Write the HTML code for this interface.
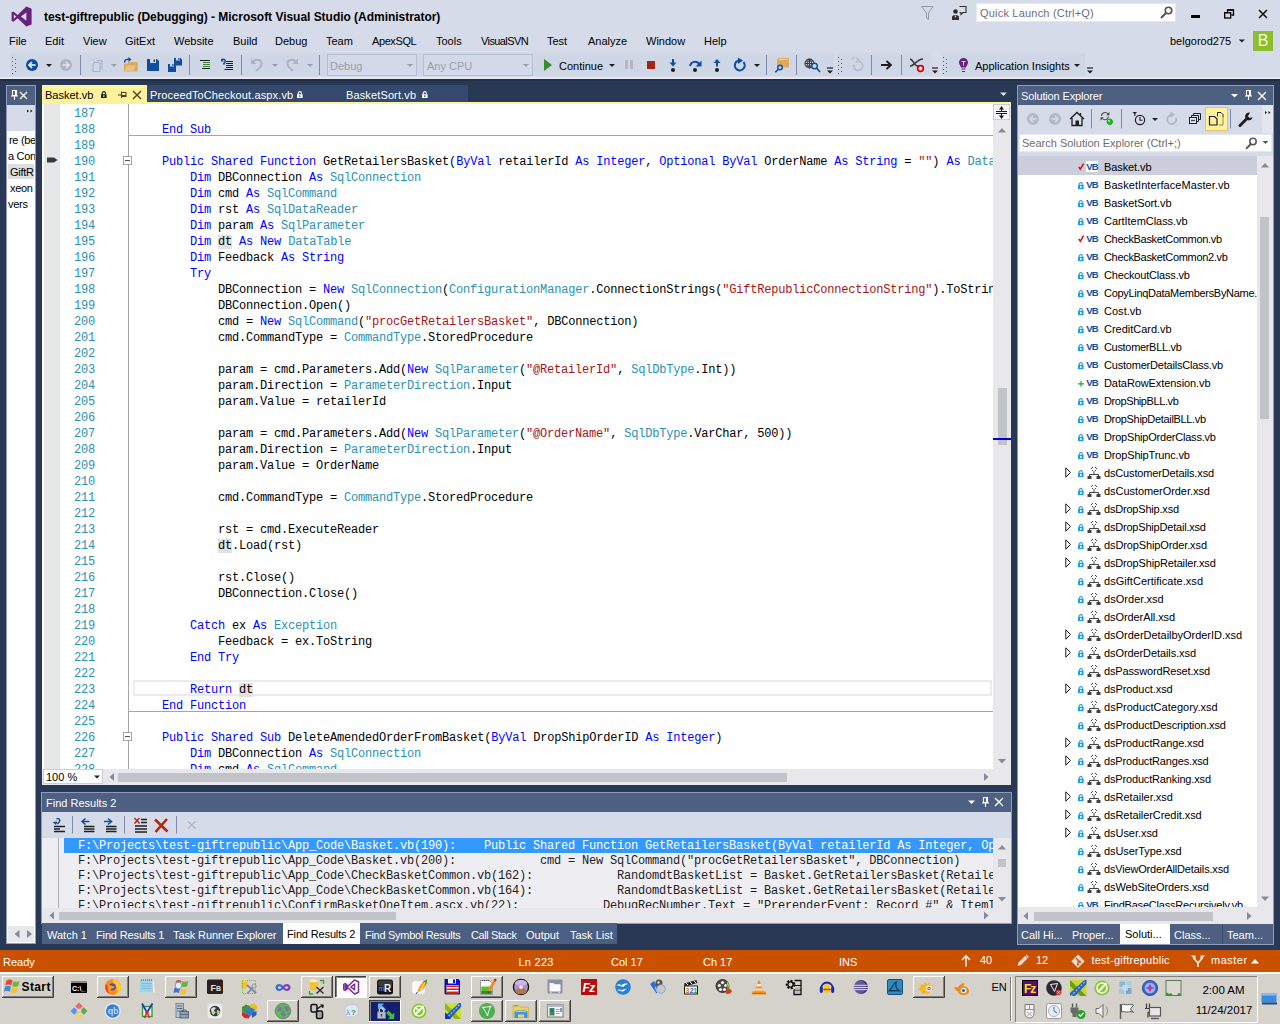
<!DOCTYPE html>
<html><head><meta charset="utf-8"><title>VS</title>
<style>
*{box-sizing:border-box}
html,body{margin:0;padding:0}
body{width:1280px;height:1024px;overflow:hidden;position:relative;background:#293955;font-family:"Liberation Sans",sans-serif;font-size:11px;color:#000;line-height:14px}
.a{position:absolute}
.t{position:absolute;white-space:pre;line-height:14px}
.w{color:#fff}
.mono{font-family:"Liberation Mono",monospace;font-size:12px;letter-spacing:-0.2px}
#chrome{left:0;top:0;width:1280px;height:79px;background:#d6dbe9}
.k{color:#0000ff}.y{color:#2b91af}.s{color:#a31515}
.cl{position:absolute;left:134px;height:16px;line-height:21px;white-space:pre;font-family:"Liberation Mono",monospace;font-size:12px;letter-spacing:-0.2px;color:#000}
.ln{position:absolute;left:67px;width:28px;text-align:right;height:16px;line-height:21px;font-family:"Liberation Mono",monospace;font-size:12px;letter-spacing:-0.2px;color:#2b91af}
.hl{background:#e2e2e2}
.fr{position:absolute;left:64px;height:15px;line-height:16px;white-space:pre;font-family:"Liberation Mono",monospace;font-size:12px;letter-spacing:-0.2px;color:#1e1e1e}
.se{position:absolute;left:86px;height:18px;line-height:18px;white-space:pre;letter-spacing:-0.1px}
svg{position:absolute;overflow:visible}
</style></head><body>
<!-- title / menu / toolbar -->
<div class="a" id="chrome"></div>
<div class="a" style="left:0;top:77px;width:1280px;height:2px;background:#e6e9f2"></div>
<div class="a" style="left:0;top:79px;width:1280px;height:2px;background:#222f48"></div>
<svg style="left:10.4px;top:5.4px" width="23.2" height="23.2" viewBox="0 0 22 22"><path d="M15.5 1.5 L20.5 3.6 L20.5 18.4 L15.5 20.5 L7.2 12.6 L3.2 15.8 L1.5 14.9 L1.5 7.1 L3.2 6.2 L7.2 9.4 Z M15.5 7 L10.4 11 L15.5 15 Z M3.6 8.9 L3.6 13.1 L6 11 Z" fill="#68217a" fill-rule="evenodd"/></svg>
<div class="t" style="left:44px;top:9.5px;font-weight:bold;font-size:12px;letter-spacing:-0.03px">test-giftrepublic (Debugging) - Microsoft Visual Studio (Administrator)</div>
<!-- menu -->
<div class="t" style="left:9px;top:34px">File</div>
<div class="t" style="left:45px;top:34px">Edit</div>
<div class="t" style="left:83px;top:34px">View</div>
<div class="t" style="left:125px;top:34px">GitExt</div>
<div class="t" style="left:174px;top:34px">Website</div>
<div class="t" style="left:233px;top:34px">Build</div>
<div class="t" style="left:275px;top:34px">Debug</div>
<div class="t" style="left:326px;top:34px">Team</div>
<div class="t" style="left:372px;top:34px;letter-spacing:-0.4px">ApexSQL</div>
<div class="t" style="left:436px;top:34px">Tools</div>
<div class="t" style="left:481px;top:34px;letter-spacing:-0.6px">VisualSVN</div>
<div class="t" style="left:547px;top:34px">Test</div>
<div class="t" style="left:588px;top:34px">Analyze</div>
<div class="t" style="left:646px;top:34px">Window</div>
<div class="t" style="left:704px;top:34px">Help</div>
<div class="t" style="left:1170px;top:34px">belgorod275</div>
<!-- title right -->
<div class="a" style="left:976px;top:3px;width:200px;height:19px;background:#fff;border:1px solid #e5e8f0"></div>
<div class="t" style="left:980px;top:6px;color:#6a6f80;letter-spacing:0.2px">Quick Launch (Ctrl+Q)</div>
<div class="a" style="left:1253px;top:31px;width:20px;height:20px;background:#8dbd2e;color:#f4fadf;font-size:16px;line-height:20px;text-align:center">B</div>
<svg style="left:0;top:0" width="1280" height="52" viewBox="0 0 1280 52">
<path d="M921.500 6.500h11.500l-4.500 6.500v6.500l-2-1.500v-5z" fill="none" stroke="#979aa5" stroke-width="1"/>
<circle cx="955.500" cy="11.500" r="2.300" fill="#2d2d2d"/><path d="M952 20v-3.500l2-1.500h3l2 1.500V20z" fill="#2d2d2d"/><path d="M954.500 15.500l1 2.500l1-2.500" fill="#d6dbe9"/>
<path d="M959.500 6.500h6.500v6h-3l-2 2v-2h-1.500" fill="none" stroke="#2d2d2d" stroke-width="1.100"/>
<circle cx="1168.500" cy="10.500" r="3.300" fill="none" stroke="#555" stroke-width="1.600"/><path d="M1166 13l-5 5" stroke="#555" stroke-width="2"/>
<rect x="1191" y="15" width="9" height="3" fill="#000"/>
<path d="M1227.500 12v-2h6v5h-2" fill="none" stroke="#000" stroke-width="1.300"/><rect x="1224.700" y="12.700" width="6" height="5.300" fill="none" stroke="#000" stroke-width="1.300"/><path d="M1227 9.800h7M1224 12.600h7" stroke="#000" stroke-width="1.200"/>
<path d="M1259 10l8 8M1267 10l-8 8" stroke="#000" stroke-width="1.500"/>
<path d="M1238.800 39.500h6l-3 3z" fill="#1e1e1e"/>
</svg>
<!-- toolbar -->
<div class="a" style="left:10px;top:53px;width:824px;height:23px;background:#cfd6e5"></div>
<div class="a" style="left:837px;top:53px;width:93px;height:23px;background:#cfd6e5"></div>
<div class="a" style="left:942px;top:53px;width:143px;height:23px;background:#cfd6e5"></div>
<div class="a" style="left:327px;top:54px;width:90px;height:22px;border:1px solid #b4bfd6;background:#d3d9e8"></div>
<div class="a" style="left:423px;top:54px;width:110px;height:22px;border:1px solid #b4bfd6;background:#d3d9e8"></div>
<div class="t" style="left:330px;top:59px;color:#9a9eab">Debug</div>
<div class="t" style="left:427px;top:59px;color:#9a9eab">Any CPU</div>
<div class="t" style="left:559px;top:59px">Continue</div>
<div class="t" style="left:975px;top:59px">Application Insights</div>
<svg style="left:0;top:0" width="1280" height="80" viewBox="0 0 1280 80">
<defs>
<g id="grip"><path d="M0 1.500h1M3 3.500h1M0 5.500h1M3 7.500h1M0 9.500h1M3 11.500h1M0 13.500h1M3 15.500h1M0 17.500h1" stroke="#4f5b75" stroke-width="1"/></g>
<path id="dd" d="M-3 -1.500h6l-3 3z"/>
<g id="ovf"><path d="M-3 -3.500h6" stroke="#1e1e1e" stroke-width="1.200"/><path d="M-3 -1h6l-3 3z" fill="#1e1e1e"/></g>
</defs>
<use href="#grip" x="12" y="56"/>
<use href="#grip" x="838" y="56"/>
<use href="#grip" x="943" y="56"/>
<!-- back / fwd -->
<circle cx="32" cy="65" r="6" fill="#0e4e9e"/><path d="M35.500 65H29.500M32 62l-3 3l3 3" stroke="#fff" stroke-width="1.600" fill="none"/>
<use href="#dd" x="49" y="65.500" fill="#1e1e1e"/>
<circle cx="66" cy="65" r="6" fill="#b0b4c0"/><path d="M62.500 65H68.500M66 62l3 3l-3 3" stroke="#dfe3ee" stroke-width="1.600" fill="none"/>
<path d="M80.500 55V75M189.500 55V75M241.500 55V75M319.500 55V75M766.500 55V75M796.500 55V75M871.500 55V75M901.500 55V75" stroke="#7f8ba8" stroke-width="1"/>
<!-- new item (disabled) -->
<path d="M94.500 62.500h5.500v9h-7v-7zM96.500 60.500h5.500v9" fill="none" stroke="#adb2c2" stroke-width="1.100"/><path d="M92 58.500l2 2M94.500 58v2" stroke="#bfc4d2" stroke-width="1"/>
<use href="#dd" x="114" y="65.500" fill="#9a9eab"/>
<!-- open -->
<path d="M124 71.500V63.500h4l1-1.500h8.500V71.500z" fill="#dcaa5e"/><path d="M128 62.500h9v7" fill="none" stroke="#dcaa5e" stroke-width="1"/><path d="M126.500 65.500h9l-2 6h-9z" fill="#e8c284"/>
<path d="M124.500 62.500c0-3 2.500-3.500 5-3" fill="none" stroke="#0e4e9e" stroke-width="1.500"/><path d="M128.500 57l3 2.500l-3 2.500z" fill="#0e4e9e"/>
<!-- save -->
<path d="M147 59h10l2 2v10h-12z" fill="#0e4e9e"/><rect x="150" y="59" width="6" height="4" fill="#cfd6e5"/><rect x="153.500" y="59.500" width="1.500" height="2.500" fill="#0e4e9e"/>
<!-- save all -->
<path d="M174 58h6.500l1.500 1.500v6h-8z" fill="#0e4e9e"/><rect x="176" y="58" width="4" height="2.500" fill="#cfd6e5"/><rect x="178.300" y="58" width="1.200" height="2" fill="#0e4e9e"/>
<path d="M168 64h6.500l1.500 1.500v6.500h-8z" fill="#0e4e9e"/><rect x="170" y="64" width="4" height="2.500" fill="#cfd6e5"/><rect x="172.300" y="64" width="1.200" height="2" fill="#0e4e9e"/>
<!-- indent icons -->
<path d="M200 60.500h10M202 68.500h8" stroke="#1e1e1e" stroke-width="1.200"/><path d="M203 62.500h7M203 64.500h7M203 66.500h7" stroke="#388a34" stroke-width="1.200"/>
<path d="M226 61.500h7M226 63.500h7M226 65.500h7M226 67.500h7M224.500 69.500h8.500" stroke="#1e1e1e" stroke-width="1.100"/><path d="M221.500 60c2.500-1.500 4.500 0 3.500 2l-1.500 2.500" fill="none" stroke="#0e4e9e" stroke-width="1.500"/><path d="M221 58.500v3h3z" fill="#0e4e9e"/>
<!-- undo / redo disabled -->
<path d="M253 62c3-3.500 9-2.500 8.500 2c-.3 3-3 5-5.500 7" fill="none" stroke="#adb2c2" stroke-width="2"/><path d="M251 58.500v5.500h5.500z" fill="#adb2c2"/>
<use href="#dd" x="275" y="65.500" fill="#9a9eab"/>
<path d="M296 62c-3-3.500-9-2.500-8.500 2c.3 3 3 5 5.500 7" fill="none" stroke="#adb2c2" stroke-width="2"/><path d="M298 58.500v5.500h-5.500z" fill="#adb2c2"/>
<use href="#dd" x="310" y="65.500" fill="#9a9eab"/>
<use href="#dd" x="410" y="65.500" fill="#9a9eab"/>
<use href="#dd" x="526" y="65.500" fill="#9a9eab"/>
<!-- continue -->
<path d="M544 59l8 6l-8 6z" fill="#388a34"/>
<use href="#dd" x="612" y="65.500" fill="#1e1e1e"/>
<rect x="625" y="60" width="3" height="9" fill="#b4b7c3"/><rect x="630" y="60" width="3" height="9" fill="#b4b7c3"/>
<rect x="647" y="61" width="8" height="8" fill="#a1260d"/>
<!-- step into/over/out -->
<path d="M673 59v5" stroke="#0e4e9e" stroke-width="2"/><path d="M669.500 62.500h7l-3.500 4z" fill="#0e4e9e"/><circle cx="673" cy="70" r="2" fill="#1e1e1e"/>
<path d="M690 66c1-5 7-5.500 9.500-1.500" fill="none" stroke="#0e4e9e" stroke-width="2"/><path d="M701.500 60.500v6h-6z" fill="#0e4e9e"/><circle cx="695" cy="70" r="2" fill="#1e1e1e"/>
<path d="M717 61v5.500" stroke="#0e4e9e" stroke-width="2"/><path d="M713.500 63h7l-3.500-4z" fill="#0e4e9e"/><circle cx="717" cy="70" r="2" fill="#1e1e1e"/>
<!-- restart -->
<path d="M743.500 62a5 5 0 1 1 -5.500 -1.300" fill="none" stroke="#0e4e9e" stroke-width="2"/><path d="M738 57.500l5 3l-5 3.500z" fill="#0e4e9e"/>
<use href="#dd" x="757" y="65.500" fill="#1e1e1e"/>
<!-- folder search -->
<path d="M777 67.500V59.500l1.500-1.500h10.500v9.500z" fill="#dcaa5e"/><path d="M779 59.500h9" stroke="#efd3a0" stroke-width="1"/>
<circle cx="780" cy="67.500" r="2.300" fill="#cfd6e5" stroke="#0e4e9e" stroke-width="1.400"/><path d="M778.300 69.200l-3 3" stroke="#0e4e9e" stroke-width="1.600"/>
<!-- globe search -->
<circle cx="809.500" cy="63.500" r="4.500" fill="none" stroke="#3a3a3a" stroke-width="1.200"/><path d="M805 63.500h9M809.500 59v9M806 61h7M806 66h7" stroke="#3a3a3a" stroke-width="1" fill="none"/><ellipse cx="809.500" cy="63.500" rx="2" ry="4.500" fill="none" stroke="#3a3a3a" stroke-width="1"/>
<circle cx="814.500" cy="66" r="2.800" fill="#cfd6e5" stroke="#0e4e9e" stroke-width="1.400"/><path d="M816.500 68l3.500 4" stroke="#0e4e9e" stroke-width="1.600"/>
<use href="#ovf" x="830" y="71.500"/>
<!-- disabled circular -->
<path d="M859 61.500a4.500 4.500 0 1 1 -5 3" fill="none" stroke="#b4b9c8" stroke-width="1.600"/><path d="M852 59l2.500-1.500M856 58l3 2l-3 2.500" fill="none" stroke="#b4b9c8" stroke-width="1.200"/>
<!-- arrow -->
<path d="M881 65h9M886.500 61l4.500 4l-4.500 4" fill="none" stroke="#1e1e1e" stroke-width="1.800"/>
<!-- break all / disable -->
<path d="M910 59c3 0 4 7 8 7h5M910 66c4 0 7-7 13-7" fill="none" stroke="#3a3a3a" stroke-width="1.600"/>
<circle cx="920.500" cy="68.500" r="2.800" fill="#fff" stroke="#e00000" stroke-width="1.800"/>
<use href="#ovf" x="935" y="71.500"/>
<!-- bulb -->
<path d="M963.500 58a4.500 4.500 0 0 1 4.500 4.500c0 2-1.500 3-2 5h-5c-.5-2-2-3-2-5a4.500 4.500 0 0 1 4.500-4.500z" fill="#68217a"/><path d="M961.500 69h4M962 71.500h3" stroke="#68217a" stroke-width="1.200"/><path d="M961.500 61.500h4M963.500 61.500v4" stroke="#e8d5ee" stroke-width="1"/>
<use href="#dd" x="1077" y="65.500" fill="#1e1e1e"/>
<use href="#ovf" x="1090" y="71.500"/>
</svg>
<!-- left auto-hidden panel -->
<div class="a" style="left:6px;top:85px;width:30px;height:859px;background:#fff;border:1px solid #8e9bbc"></div>
<div class="a" style="left:7px;top:86px;width:28px;height:19px;background:#4d6082"></div>
<div class="a" style="left:7px;top:105px;width:28px;height:26px;background:#d6dbe9"></div>
<div class="a" style="left:7px;top:131px;width:28px;height:100px;overflow:hidden">
<div class="a" style="left:1px;top:33px;width:26px;height:15px;background:#dcdde2"></div>
<div class="t" style="left:2px;top:2px;letter-spacing:-0.3px">re (be</div>
<div class="t" style="left:1px;top:18px;letter-spacing:-0.3px">a Con</div>
<div class="t" style="left:3px;top:34px;letter-spacing:-0.3px">GiftR</div>
<div class="t" style="left:3px;top:50px;letter-spacing:-0.3px">xeon</div>
<div class="t" style="left:1px;top:66px;letter-spacing:-0.3px">vers</div>
</div>
<div class="a" style="left:8px;top:926px;width:26px;height:16px;background:#e8e8ec"></div>
<!-- document tabs -->
<div class="a" style="left:42px;top:85px;width:105px;height:19px;background:#fff29d"></div>
<div class="a" style="left:147px;top:85px;width:321px;height:17px;background:#34496c"></div>
<div class="a" style="left:42px;top:102px;width:969px;height:2px;background:#fff29d"></div>
<div class="t" style="left:45px;top:88px">Basket.vb</div>
<div class="t w" style="left:150px;top:88px;letter-spacing:0.13px">ProceedToCheckout.aspx.vb</div>
<div class="t w" style="left:346px;top:88px;letter-spacing:0.13px">BasketSort.vb</div>
<!-- editor -->
<div class="a" id="ed" style="left:42px;top:104px;width:969px;height:681px;background:#fff;overflow:hidden">
<div class="a" style="left:2px;top:0;width:16px;height:665px;background:#e6e7e8"></div>
<div class="a" style="left:86px;top:0;width:1px;height:665px;background:#a5a5a5"></div>
<div class="a" style="left:86px;top:31px;width:865px;height:1px;background:#a5a5a5"></div>
<div class="a" style="left:86px;top:607px;width:865px;height:1px;background:#a5a5a5"></div>
<div class="a" style="left:91px;top:576px;width:859px;height:16px;border:2px solid #eaeaf2"></div>
<div class="a" style="left:81px;top:52px;width:9px;height:9px;border:1px solid #a5a5a5;background:#fff"></div><div class="a" style="left:83px;top:56px;width:5px;height:1px;background:#555"></div>
<div class="a" style="left:81px;top:628px;width:9px;height:9px;border:1px solid #a5a5a5;background:#fff"></div><div class="a" style="left:83px;top:632px;width:5px;height:1px;background:#555"></div>
<div class="a" id="code" style="left:-42px;top:0;width:993px;height:665px;overflow:hidden">
<div class="ln" style="top:0px">187</div>
<div class="ln" style="top:16px">188</div>
<div class="cl" style="top:16px">    <span class="k">End</span> <span class="k">Sub</span></div>
<div class="ln" style="top:32px">189</div>
<div class="ln" style="top:48px">190</div>
<div class="cl" style="top:48px">    <span class="k">Public</span> <span class="k">Shared</span> <span class="k">Function</span> GetRetailersBasket(<span class="k">ByVal</span> retailerId <span class="k">As</span> <span class="k">Integer</span>, <span class="k">Optional</span> <span class="k">ByVal</span> OrderName <span class="k">As</span> <span class="k">String</span> = <span class="s">""</span>) <span class="k">As</span> <span class="y">DataTable</span></div>
<div class="ln" style="top:64px">191</div>
<div class="cl" style="top:64px">        <span class="k">Dim</span> DBConnection <span class="k">As</span> <span class="y">SqlConnection</span></div>
<div class="ln" style="top:80px">192</div>
<div class="cl" style="top:80px">        <span class="k">Dim</span> cmd <span class="k">As</span> <span class="y">SqlCommand</span></div>
<div class="ln" style="top:96px">193</div>
<div class="cl" style="top:96px">        <span class="k">Dim</span> rst <span class="k">As</span> <span class="y">SqlDataReader</span></div>
<div class="ln" style="top:112px">194</div>
<div class="cl" style="top:112px">        <span class="k">Dim</span> param <span class="k">As</span> <span class="y">SqlParameter</span></div>
<div class="ln" style="top:128px">195</div>
<div class="cl" style="top:128px">        <span class="k">Dim</span> <span class="hl">dt</span> <span class="k">As</span> <span class="k">New</span> <span class="y">DataTable</span></div>
<div class="ln" style="top:144px">196</div>
<div class="cl" style="top:144px">        <span class="k">Dim</span> Feedback <span class="k">As</span> <span class="k">String</span></div>
<div class="ln" style="top:160px">197</div>
<div class="cl" style="top:160px">        <span class="k">Try</span></div>
<div class="ln" style="top:176px">198</div>
<div class="cl" style="top:176px">            DBConnection = <span class="k">New</span> <span class="y">SqlConnection</span>(<span class="y">ConfigurationManager</span>.ConnectionStrings(<span class="s">"GiftRepublicConnectionString"</span>).ToString)</div>
<div class="ln" style="top:192px">199</div>
<div class="cl" style="top:192px">            DBConnection.Open()</div>
<div class="ln" style="top:208px">200</div>
<div class="cl" style="top:208px">            cmd = <span class="k">New</span> <span class="y">SqlCommand</span>(<span class="s">"procGetRetailersBasket"</span>, DBConnection)</div>
<div class="ln" style="top:224px">201</div>
<div class="cl" style="top:224px">            cmd.CommandType = <span class="y">CommandType</span>.StoredProcedure</div>
<div class="ln" style="top:240px">202</div>
<div class="ln" style="top:256px">203</div>
<div class="cl" style="top:256px">            param = cmd.Parameters.Add(<span class="k">New</span> <span class="y">SqlParameter</span>(<span class="s">"@RetailerId"</span>, <span class="y">SqlDbType</span>.Int))</div>
<div class="ln" style="top:272px">204</div>
<div class="cl" style="top:272px">            param.Direction = <span class="y">ParameterDirection</span>.Input</div>
<div class="ln" style="top:288px">205</div>
<div class="cl" style="top:288px">            param.Value = retailerId</div>
<div class="ln" style="top:304px">206</div>
<div class="ln" style="top:320px">207</div>
<div class="cl" style="top:320px">            param = cmd.Parameters.Add(<span class="k">New</span> <span class="y">SqlParameter</span>(<span class="s">"@OrderName"</span>, <span class="y">SqlDbType</span>.VarChar, 500))</div>
<div class="ln" style="top:336px">208</div>
<div class="cl" style="top:336px">            param.Direction = <span class="y">ParameterDirection</span>.Input</div>
<div class="ln" style="top:352px">209</div>
<div class="cl" style="top:352px">            param.Value = OrderName</div>
<div class="ln" style="top:368px">210</div>
<div class="ln" style="top:384px">211</div>
<div class="cl" style="top:384px">            cmd.CommandType = <span class="y">CommandType</span>.StoredProcedure</div>
<div class="ln" style="top:400px">212</div>
<div class="ln" style="top:416px">213</div>
<div class="cl" style="top:416px">            rst = cmd.ExecuteReader</div>
<div class="ln" style="top:432px">214</div>
<div class="cl" style="top:432px">            <span class="hl">dt</span>.Load(rst)</div>
<div class="ln" style="top:448px">215</div>
<div class="ln" style="top:464px">216</div>
<div class="cl" style="top:464px">            rst.Close()</div>
<div class="ln" style="top:480px">217</div>
<div class="cl" style="top:480px">            DBConnection.Close()</div>
<div class="ln" style="top:496px">218</div>
<div class="ln" style="top:512px">219</div>
<div class="cl" style="top:512px">        <span class="k">Catch</span> ex <span class="k">As</span> <span class="y">Exception</span></div>
<div class="ln" style="top:528px">220</div>
<div class="cl" style="top:528px">            Feedback = ex.ToString</div>
<div class="ln" style="top:544px">221</div>
<div class="cl" style="top:544px">        <span class="k">End</span> <span class="k">Try</span></div>
<div class="ln" style="top:560px">222</div>
<div class="ln" style="top:576px">223</div>
<div class="cl" style="top:576px">        <span class="k">Return</span> <span class="hl">dt</span></div>
<div class="ln" style="top:592px">224</div>
<div class="cl" style="top:592px">    <span class="k">End</span> <span class="k">Function</span></div>
<div class="ln" style="top:608px">225</div>
<div class="ln" style="top:624px">226</div>
<div class="cl" style="top:624px">    <span class="k">Public</span> <span class="k">Shared</span> <span class="k">Sub</span> DeleteAmendedOrderFromBasket(<span class="k">ByVal</span> DropShipOrderID <span class="k">As</span> <span class="k">Integer</span>)</div>
<div class="ln" style="top:640px">227</div>
<div class="cl" style="top:640px">        <span class="k">Dim</span> DBConnection <span class="k">As</span> <span class="y">SqlConnection</span></div>
<div class="ln" style="top:656px">228</div>
<div class="cl" style="top:656px">        <span class="k">Dim</span> cmd <span class="k">As</span> <span class="y">SqlCommand</span></div>
</div>
<!-- v scrollbar -->
<div class="a" style="left:951px;top:0;width:18px;height:665px;background:#e8e8ec"></div>
<div class="a" style="left:951px;top:0;width:17px;height:16px;background:#f5f5f5;border:1px solid #cccedb"></div>
<div class="a" style="left:956px;top:284px;width:9px;height:57px;background:#c2c3c9"></div>
<div class="a" style="left:951px;top:334px;width:18px;height:2px;background:#0000cd"></div>
<!-- h scrollbar -->
<div class="a" style="left:0;top:665px;width:969px;height:16px;background:#e8e8ec"></div>
<div class="a" style="left:1px;top:665px;width:60px;height:15px;background:#fff;border:1px solid #cccedb"></div>
<div class="t" style="left:4px;top:666px">100 %</div>
<div class="a" style="left:76px;top:669px;width:669px;height:9px;background:#c2c3c9"></div>
</div>
<!-- find results -->
<div class="a" style="left:41px;top:792px;width:971px;height:132px;background:#8e9bbc"></div>
<div class="a" style="left:42px;top:793px;width:969px;height:19px;background:#4d6082"></div>
<div class="t w" style="left:46px;top:796px">Find Results 2</div>
<div class="a" style="left:42px;top:812px;width:969px;height:26px;background:#d6dbe9"></div>
<div class="a" id="fr" style="left:42px;top:838px;width:969px;height:85px;background:#eeeef2;overflow:hidden">
<div class="a" style="left:16px;top:0;width:1px;height:70px;background:#b0b0b0"></div>
<div class="a" style="left:-42px;top:0;width:993px;height:70px;overflow:hidden">
<div class="fr" style="top:0px;background:#3399ff;color:#fff;width:1000px">  F:\Projects\test-giftrepublic\App_Code\Basket.vb(190):    Public Shared Function GetRetailersBasket(ByVal retailerId As Integer, Optional ByVal OrderName As String = "") As DataTable</div>
<div class="fr" style="top:15px">  F:\Projects\test-giftrepublic\App_Code\Basket.vb(200):            cmd = New SqlCommand("procGetRetailersBasket", DBConnection)</div>
<div class="fr" style="top:30px">  F:\Projects\test-giftrepublic\App_Code\CheckBasketCommon.vb(162):            RandomdtBasketList = Basket.GetRetailersBasket(RetailerID, OrderName)</div>
<div class="fr" style="top:45px">  F:\Projects\test-giftrepublic\App_Code\CheckBasketCommon.vb(164):            RandomdtBasketList = Basket.GetRetailersBasket(RetailerID)</div>
<div class="fr" style="top:60px">  F:\Projects\test-giftrepublic\ConfirmBasketOneItem.ascx.vb(22):            DebugRecNumber.Text = "PrerenderEvent: Record #" &amp; ItemIndex</div>
</div>
<div class="a" style="left:951px;top:0;width:18px;height:70px;background:#e8e8ec"></div>
<div class="a" style="left:0;top:70px;width:969px;height:15px;background:#e8e8ec"></div>
<div class="a" style="left:17px;top:74px;width:337px;height:8px;background:#c2c3c9"></div>
<div class="a" style="left:956px;top:21px;width:8px;height:8px;background:#c2c3c9"></div>
</div>
<!-- bottom tabs -->
<div class="a" style="left:42px;top:923px;width:575px;height:21px;background:#4b5f83"></div>
<div class="a" style="left:283px;top:923px;width:77px;height:21px;background:#fff"></div>
<div class="t w" style="left:47px;top:928px">Watch 1</div>
<div class="t w" style="left:96px;top:928px;letter-spacing:-0.14px">Find Results 1</div>
<div class="t w" style="left:173px;top:928px;letter-spacing:-0.12px">Task Runner Explorer</div>
<div class="t" style="left:287px;top:927px;letter-spacing:-0.14px">Find Results 2</div>
<div class="t w" style="left:365px;top:928px;letter-spacing:-0.29px">Find Symbol Results</div>
<div class="t w" style="left:471px;top:928px;letter-spacing:-0.4px">Call Stack</div>
<div class="t w" style="left:526px;top:928px">Output</div>
<div class="t w" style="left:570px;top:928px">Task List</div>
<!-- Find results icons -->
<svg style="left:42px;top:793px" width="969" height="152" viewBox="42 793 969 152">
<path d="M968 800.500h7l-3.500 3.500z" fill="#fff"/>
<use href="#pinv" x="982" y="797" stroke="#fff"/>
<use href="#xx" x="995" y="798" stroke="#fff"/>
<path d="M72.500 816V833.500M124.500 816V833.500M176.500 816V833.500" stroke="#7f8ba8" stroke-width="1"/>
<path d="M54 826.500h11M54 829h6M54 831.500h11" stroke="#1e1e1e" stroke-width="1.300"/><path d="M56.500 819c2.500-1 4 .5 3 2.500l-2 2.500" fill="none" stroke="#0e4e9e" stroke-width="1.400"/><path d="M52.500 822l3.500 3l1.500-3.500z" fill="#0e4e9e"/>
<path d="M84 826.500h10.500M84 829h10.500M84 831.500h10.500" stroke="#1e1e1e" stroke-width="1.300"/><path d="M82.500 821.500h7" stroke="#0e4e9e" stroke-width="1.500"/><path d="M85.500 818.500l-3.500 3l3.500 3" fill="none" stroke="#0e4e9e" stroke-width="1.500"/>
<path d="M106 826.500h10.500M106 829h10.500M106 831.500h10.500" stroke="#1e1e1e" stroke-width="1.300"/><path d="M104 821.500h7" stroke="#0e4e9e" stroke-width="1.500"/><path d="M108 818.500l3.500 3l-3.500 3" fill="none" stroke="#0e4e9e" stroke-width="1.500"/>
<path d="M141 819.500h6M141 822.500h6M135 826h12M135 829h12M135 832h12" stroke="#1e1e1e" stroke-width="1.300"/><path d="M134.500 818l5 5.500M139.500 818l-5 5.500" stroke="#b3260a" stroke-width="1.400"/>
<path d="M155 819.500l12.500 12M167 819l-11.500 13" stroke="#b3260a" stroke-width="2.600"/>
<path d="M188 821.500l7.500 7M195.500 821.500l-7.500 7" stroke="#b4b8c4" stroke-width="1.600"/>
</svg>
<!-- solution explorer -->
<div class="a" style="left:1017px;top:85px;width:257px;height:860px;background:#8e9bbc"></div>
<div class="a" style="left:1018px;top:86px;width:255px;height:19px;background:#4d6082"></div>
<div class="t w" style="left:1021px;top:89px;letter-spacing:-0.15px">Solution Explorer</div>
<div class="a" style="left:1018px;top:105px;width:255px;height:51px;background:#d6dbe9"></div>
<div class="a" style="left:1019px;top:134px;width:253px;height:18px;background:#fff;border:1px solid #e5e8f0"></div>
<div class="t" style="left:1022px;top:136px;color:#6d6d6d">Search Solution Explorer (Ctrl+;)</div>
<div class="a" id="se" style="left:1018px;top:156px;width:255px;height:768px;background:#fff;overflow:hidden">
<div class="a" style="left:0;top:0;width:239px;height:19px;background:#cccedb"></div>
<div class="a" style="left:0;top:2px;width:239px;height:749px;overflow:hidden">
<svg style="left:60px;top:5px" width="6.5" height="7" viewBox="0 0 8 9"><path d="M0.8 5 L2.8 8 L7 0.8" fill="none" stroke="#e51400" stroke-width="2"/></svg>
<div class="a" style="left:68px;top:3px;width:12px;height:11px;font-weight:bold;font-size:9.5px;line-height:11px;letter-spacing:-0.8px;color:#0e4d9a;text-align:center;background:#fff;">VB</div>
<div class="se" style="top:0px;letter-spacing:-0.10px">Basket.vb</div>
<svg style="left:60px;top:24px" width="5.6" height="7.2" viewBox="0 0 7 9"><path d="M1.5 4 V2.8 A2 2 0 0 1 5.5 2.8 V4" fill="none" stroke="#1ba1e2" stroke-width="1.3"/><rect x="0" y="3.6" width="7" height="5.4" fill="#1ba1e2"/><rect x="2.5" y="5" width="2" height="2.4" fill="#fff"/></svg>
<div class="a" style="left:68px;top:21px;width:12px;height:11px;font-weight:bold;font-size:9.5px;line-height:11px;letter-spacing:-0.8px;color:#0e4d9a;text-align:center;">VB</div>
<div class="se" style="top:18px;letter-spacing:0.07px">BasketInterfaceMaster.vb</div>
<svg style="left:60px;top:42px" width="5.6" height="7.2" viewBox="0 0 7 9"><path d="M1.5 4 V2.8 A2 2 0 0 1 5.5 2.8 V4" fill="none" stroke="#1ba1e2" stroke-width="1.3"/><rect x="0" y="3.6" width="7" height="5.4" fill="#1ba1e2"/><rect x="2.5" y="5" width="2" height="2.4" fill="#fff"/></svg>
<div class="a" style="left:68px;top:39px;width:12px;height:11px;font-weight:bold;font-size:9.5px;line-height:11px;letter-spacing:-0.8px;color:#0e4d9a;text-align:center;">VB</div>
<div class="se" style="top:36px;letter-spacing:-0.07px">BasketSort.vb</div>
<svg style="left:60px;top:60px" width="5.6" height="7.2" viewBox="0 0 7 9"><path d="M1.5 4 V2.8 A2 2 0 0 1 5.5 2.8 V4" fill="none" stroke="#1ba1e2" stroke-width="1.3"/><rect x="0" y="3.6" width="7" height="5.4" fill="#1ba1e2"/><rect x="2.5" y="5" width="2" height="2.4" fill="#fff"/></svg>
<div class="a" style="left:68px;top:57px;width:12px;height:11px;font-weight:bold;font-size:9.5px;line-height:11px;letter-spacing:-0.8px;color:#0e4d9a;text-align:center;">VB</div>
<div class="se" style="top:54px;letter-spacing:-0.05px">CartItemClass.vb</div>
<svg style="left:60px;top:77px" width="6.5" height="7" viewBox="0 0 8 9"><path d="M0.8 5 L2.8 8 L7 0.8" fill="none" stroke="#e51400" stroke-width="2"/></svg>
<div class="a" style="left:68px;top:75px;width:12px;height:11px;font-weight:bold;font-size:9.5px;line-height:11px;letter-spacing:-0.8px;color:#0e4d9a;text-align:center;">VB</div>
<div class="se" style="top:72px;letter-spacing:-0.32px">CheckBasketCommon.vb</div>
<svg style="left:60px;top:96px" width="5.6" height="7.2" viewBox="0 0 7 9"><path d="M1.5 4 V2.8 A2 2 0 0 1 5.5 2.8 V4" fill="none" stroke="#1ba1e2" stroke-width="1.3"/><rect x="0" y="3.6" width="7" height="5.4" fill="#1ba1e2"/><rect x="2.5" y="5" width="2" height="2.4" fill="#fff"/></svg>
<div class="a" style="left:68px;top:93px;width:12px;height:11px;font-weight:bold;font-size:9.5px;line-height:11px;letter-spacing:-0.8px;color:#0e4d9a;text-align:center;">VB</div>
<div class="se" style="top:90px;letter-spacing:-0.32px">CheckBasketCommon2.vb</div>
<svg style="left:60px;top:114px" width="5.6" height="7.2" viewBox="0 0 7 9"><path d="M1.5 4 V2.8 A2 2 0 0 1 5.5 2.8 V4" fill="none" stroke="#1ba1e2" stroke-width="1.3"/><rect x="0" y="3.6" width="7" height="5.4" fill="#1ba1e2"/><rect x="2.5" y="5" width="2" height="2.4" fill="#fff"/></svg>
<div class="a" style="left:68px;top:111px;width:12px;height:11px;font-weight:bold;font-size:9.5px;line-height:11px;letter-spacing:-0.8px;color:#0e4d9a;text-align:center;">VB</div>
<div class="se" style="top:108px;letter-spacing:-0.18px">CheckoutClass.vb</div>
<svg style="left:60px;top:132px" width="5.6" height="7.2" viewBox="0 0 7 9"><path d="M1.5 4 V2.8 A2 2 0 0 1 5.5 2.8 V4" fill="none" stroke="#1ba1e2" stroke-width="1.3"/><rect x="0" y="3.6" width="7" height="5.4" fill="#1ba1e2"/><rect x="2.5" y="5" width="2" height="2.4" fill="#fff"/></svg>
<div class="a" style="left:68px;top:129px;width:12px;height:11px;font-weight:bold;font-size:9.5px;line-height:11px;letter-spacing:-0.8px;color:#0e4d9a;text-align:center;">VB</div>
<div class="se" style="top:126px;letter-spacing:-0.3px">CopyLinqDataMembersByName.vb</div>
<svg style="left:60px;top:150px" width="5.6" height="7.2" viewBox="0 0 7 9"><path d="M1.5 4 V2.8 A2 2 0 0 1 5.5 2.8 V4" fill="none" stroke="#1ba1e2" stroke-width="1.3"/><rect x="0" y="3.6" width="7" height="5.4" fill="#1ba1e2"/><rect x="2.5" y="5" width="2" height="2.4" fill="#fff"/></svg>
<div class="a" style="left:68px;top:147px;width:12px;height:11px;font-weight:bold;font-size:9.5px;line-height:11px;letter-spacing:-0.8px;color:#0e4d9a;text-align:center;">VB</div>
<div class="se" style="top:144px;letter-spacing:0.03px">Cost.vb</div>
<svg style="left:60px;top:168px" width="5.6" height="7.2" viewBox="0 0 7 9"><path d="M1.5 4 V2.8 A2 2 0 0 1 5.5 2.8 V4" fill="none" stroke="#1ba1e2" stroke-width="1.3"/><rect x="0" y="3.6" width="7" height="5.4" fill="#1ba1e2"/><rect x="2.5" y="5" width="2" height="2.4" fill="#fff"/></svg>
<div class="a" style="left:68px;top:165px;width:12px;height:11px;font-weight:bold;font-size:9.5px;line-height:11px;letter-spacing:-0.8px;color:#0e4d9a;text-align:center;">VB</div>
<div class="se" style="top:162px;letter-spacing:-0.02px">CreditCard.vb</div>
<svg style="left:60px;top:186px" width="5.6" height="7.2" viewBox="0 0 7 9"><path d="M1.5 4 V2.8 A2 2 0 0 1 5.5 2.8 V4" fill="none" stroke="#1ba1e2" stroke-width="1.3"/><rect x="0" y="3.6" width="7" height="5.4" fill="#1ba1e2"/><rect x="2.5" y="5" width="2" height="2.4" fill="#fff"/></svg>
<div class="a" style="left:68px;top:183px;width:12px;height:11px;font-weight:bold;font-size:9.5px;line-height:11px;letter-spacing:-0.8px;color:#0e4d9a;text-align:center;">VB</div>
<div class="se" style="top:180px;letter-spacing:-0.32px">CustomerBLL.vb</div>
<svg style="left:60px;top:204px" width="5.6" height="7.2" viewBox="0 0 7 9"><path d="M1.5 4 V2.8 A2 2 0 0 1 5.5 2.8 V4" fill="none" stroke="#1ba1e2" stroke-width="1.3"/><rect x="0" y="3.6" width="7" height="5.4" fill="#1ba1e2"/><rect x="2.5" y="5" width="2" height="2.4" fill="#fff"/></svg>
<div class="a" style="left:68px;top:201px;width:12px;height:11px;font-weight:bold;font-size:9.5px;line-height:11px;letter-spacing:-0.8px;color:#0e4d9a;text-align:center;">VB</div>
<div class="se" style="top:198px;letter-spacing:-0.20px">CustomerDetailsClass.vb</div>
<svg style="left:60px;top:222px" width="6" height="7.7" viewBox="0 0 7 9"><path d="M3.5 1 V8 M0 4.5 H7" fill="none" stroke="#339933" stroke-width="1.3"/></svg>
<div class="a" style="left:68px;top:219px;width:12px;height:11px;font-weight:bold;font-size:9.5px;line-height:11px;letter-spacing:-0.8px;color:#0e4d9a;text-align:center;">VB</div>
<div class="se" style="top:216px;letter-spacing:-0.09px">DataRowExtension.vb</div>
<svg style="left:60px;top:240px" width="5.6" height="7.2" viewBox="0 0 7 9"><path d="M1.5 4 V2.8 A2 2 0 0 1 5.5 2.8 V4" fill="none" stroke="#1ba1e2" stroke-width="1.3"/><rect x="0" y="3.6" width="7" height="5.4" fill="#1ba1e2"/><rect x="2.5" y="5" width="2" height="2.4" fill="#fff"/></svg>
<div class="a" style="left:68px;top:237px;width:12px;height:11px;font-weight:bold;font-size:9.5px;line-height:11px;letter-spacing:-0.8px;color:#0e4d9a;text-align:center;">VB</div>
<div class="se" style="top:234px;letter-spacing:-0.41px">DropShipBLL.vb</div>
<svg style="left:60px;top:258px" width="5.6" height="7.2" viewBox="0 0 7 9"><path d="M1.5 4 V2.8 A2 2 0 0 1 5.5 2.8 V4" fill="none" stroke="#1ba1e2" stroke-width="1.3"/><rect x="0" y="3.6" width="7" height="5.4" fill="#1ba1e2"/><rect x="2.5" y="5" width="2" height="2.4" fill="#fff"/></svg>
<div class="a" style="left:68px;top:255px;width:12px;height:11px;font-weight:bold;font-size:9.5px;line-height:11px;letter-spacing:-0.8px;color:#0e4d9a;text-align:center;">VB</div>
<div class="se" style="top:252px;letter-spacing:-0.32px">DropShipDetailBLL.vb</div>
<svg style="left:60px;top:276px" width="5.6" height="7.2" viewBox="0 0 7 9"><path d="M1.5 4 V2.8 A2 2 0 0 1 5.5 2.8 V4" fill="none" stroke="#1ba1e2" stroke-width="1.3"/><rect x="0" y="3.6" width="7" height="5.4" fill="#1ba1e2"/><rect x="2.5" y="5" width="2" height="2.4" fill="#fff"/></svg>
<div class="a" style="left:68px;top:273px;width:12px;height:11px;font-weight:bold;font-size:9.5px;line-height:11px;letter-spacing:-0.8px;color:#0e4d9a;text-align:center;">VB</div>
<div class="se" style="top:270px;letter-spacing:-0.21px">DropShipOrderClass.vb</div>
<svg style="left:60px;top:294px" width="5.6" height="7.2" viewBox="0 0 7 9"><path d="M1.5 4 V2.8 A2 2 0 0 1 5.5 2.8 V4" fill="none" stroke="#1ba1e2" stroke-width="1.3"/><rect x="0" y="3.6" width="7" height="5.4" fill="#1ba1e2"/><rect x="2.5" y="5" width="2" height="2.4" fill="#fff"/></svg>
<div class="a" style="left:68px;top:291px;width:12px;height:11px;font-weight:bold;font-size:9.5px;line-height:11px;letter-spacing:-0.8px;color:#0e4d9a;text-align:center;">VB</div>
<div class="se" style="top:288px;letter-spacing:-0.16px">DropShipTrunc.vb</div>
<svg style="left:47px;top:309px" width="7" height="11" viewBox="0 0 7 11"><path d="M0.800 0.800 L5.500 5.500 L0.800 10.200 Z" fill="none" stroke="#1e1e1e" stroke-width="1"/></svg>
<svg style="left:60px;top:312px" width="5.6" height="7.2" viewBox="0 0 7 9"><path d="M1.5 4 V2.8 A2 2 0 0 1 5.5 2.8 V4" fill="none" stroke="#1ba1e2" stroke-width="1.3"/><rect x="0" y="3.6" width="7" height="5.4" fill="#1ba1e2"/><rect x="2.5" y="5" width="2" height="2.4" fill="#fff"/></svg>
<svg style="left:69px;top:308px" width="14" height="14" viewBox="0 0 14 14"><path d="M5 1.5h1M8 1.5h1M4.5 2v1M9.5 2v1M5 4.5h1M8 4.5h1" stroke="#424242" stroke-width="1" fill="none"/><path d="M7 5v3M2.5 11V8.5h9V11" stroke="#424242" stroke-width="1" fill="none"/><rect x="0.5" y="10" width="4" height="3" fill="#424242"/><rect x="9.500" y="10" width="4" height="3" fill="#424242"/></svg>
<div class="se" style="top:306px;letter-spacing:-0.15px">dsCustomerDetails.xsd</div>
<svg style="left:60px;top:330px" width="5.6" height="7.2" viewBox="0 0 7 9"><path d="M1.5 4 V2.8 A2 2 0 0 1 5.5 2.8 V4" fill="none" stroke="#1ba1e2" stroke-width="1.3"/><rect x="0" y="3.6" width="7" height="5.4" fill="#1ba1e2"/><rect x="2.5" y="5" width="2" height="2.4" fill="#fff"/></svg>
<svg style="left:69px;top:326px" width="14" height="14" viewBox="0 0 14 14"><path d="M5 1.5h1M8 1.5h1M4.5 2v1M9.5 2v1M5 4.5h1M8 4.5h1" stroke="#424242" stroke-width="1" fill="none"/><path d="M7 5v3M2.5 11V8.5h9V11" stroke="#424242" stroke-width="1" fill="none"/><rect x="0.5" y="10" width="4" height="3" fill="#424242"/><rect x="9.500" y="10" width="4" height="3" fill="#424242"/></svg>
<div class="se" style="top:324px;letter-spacing:-0.06px">dsCustomerOrder.xsd</div>
<svg style="left:47px;top:345px" width="7" height="11" viewBox="0 0 7 11"><path d="M0.800 0.800 L5.500 5.500 L0.800 10.200 Z" fill="none" stroke="#1e1e1e" stroke-width="1"/></svg>
<svg style="left:60px;top:348px" width="5.6" height="7.2" viewBox="0 0 7 9"><path d="M1.5 4 V2.8 A2 2 0 0 1 5.5 2.8 V4" fill="none" stroke="#1ba1e2" stroke-width="1.3"/><rect x="0" y="3.6" width="7" height="5.4" fill="#1ba1e2"/><rect x="2.5" y="5" width="2" height="2.4" fill="#fff"/></svg>
<svg style="left:69px;top:344px" width="14" height="14" viewBox="0 0 14 14"><path d="M5 1.5h1M8 1.5h1M4.5 2v1M9.5 2v1M5 4.5h1M8 4.5h1" stroke="#424242" stroke-width="1" fill="none"/><path d="M7 5v3M2.5 11V8.5h9V11" stroke="#424242" stroke-width="1" fill="none"/><rect x="0.5" y="10" width="4" height="3" fill="#424242"/><rect x="9.500" y="10" width="4" height="3" fill="#424242"/></svg>
<div class="se" style="top:342px;letter-spacing:-0.20px">dsDropShip.xsd</div>
<svg style="left:47px;top:363px" width="7" height="11" viewBox="0 0 7 11"><path d="M0.800 0.800 L5.500 5.500 L0.800 10.200 Z" fill="none" stroke="#1e1e1e" stroke-width="1"/></svg>
<svg style="left:60px;top:366px" width="5.6" height="7.2" viewBox="0 0 7 9"><path d="M1.5 4 V2.8 A2 2 0 0 1 5.5 2.8 V4" fill="none" stroke="#1ba1e2" stroke-width="1.3"/><rect x="0" y="3.6" width="7" height="5.4" fill="#1ba1e2"/><rect x="2.5" y="5" width="2" height="2.4" fill="#fff"/></svg>
<svg style="left:69px;top:362px" width="14" height="14" viewBox="0 0 14 14"><path d="M5 1.5h1M8 1.5h1M4.5 2v1M9.5 2v1M5 4.5h1M8 4.5h1" stroke="#424242" stroke-width="1" fill="none"/><path d="M7 5v3M2.5 11V8.5h9V11" stroke="#424242" stroke-width="1" fill="none"/><rect x="0.5" y="10" width="4" height="3" fill="#424242"/><rect x="9.500" y="10" width="4" height="3" fill="#424242"/></svg>
<div class="se" style="top:360px;letter-spacing:-0.20px">dsDropShipDetail.xsd</div>
<svg style="left:47px;top:381px" width="7" height="11" viewBox="0 0 7 11"><path d="M0.800 0.800 L5.500 5.500 L0.800 10.200 Z" fill="none" stroke="#1e1e1e" stroke-width="1"/></svg>
<svg style="left:60px;top:384px" width="5.6" height="7.2" viewBox="0 0 7 9"><path d="M1.5 4 V2.8 A2 2 0 0 1 5.5 2.8 V4" fill="none" stroke="#1ba1e2" stroke-width="1.3"/><rect x="0" y="3.6" width="7" height="5.4" fill="#1ba1e2"/><rect x="2.5" y="5" width="2" height="2.4" fill="#fff"/></svg>
<svg style="left:69px;top:380px" width="14" height="14" viewBox="0 0 14 14"><path d="M5 1.5h1M8 1.5h1M4.5 2v1M9.5 2v1M5 4.5h1M8 4.5h1" stroke="#424242" stroke-width="1" fill="none"/><path d="M7 5v3M2.5 11V8.5h9V11" stroke="#424242" stroke-width="1" fill="none"/><rect x="0.5" y="10" width="4" height="3" fill="#424242"/><rect x="9.500" y="10" width="4" height="3" fill="#424242"/></svg>
<div class="se" style="top:378px;letter-spacing:-0.12px">dsDropShipOrder.xsd</div>
<svg style="left:47px;top:399px" width="7" height="11" viewBox="0 0 7 11"><path d="M0.800 0.800 L5.500 5.500 L0.800 10.200 Z" fill="none" stroke="#1e1e1e" stroke-width="1"/></svg>
<svg style="left:60px;top:402px" width="5.6" height="7.2" viewBox="0 0 7 9"><path d="M1.5 4 V2.8 A2 2 0 0 1 5.5 2.8 V4" fill="none" stroke="#1ba1e2" stroke-width="1.3"/><rect x="0" y="3.6" width="7" height="5.4" fill="#1ba1e2"/><rect x="2.5" y="5" width="2" height="2.4" fill="#fff"/></svg>
<svg style="left:69px;top:398px" width="14" height="14" viewBox="0 0 14 14"><path d="M5 1.5h1M8 1.5h1M4.5 2v1M9.5 2v1M5 4.5h1M8 4.5h1" stroke="#424242" stroke-width="1" fill="none"/><path d="M7 5v3M2.5 11V8.5h9V11" stroke="#424242" stroke-width="1" fill="none"/><rect x="0.5" y="10" width="4" height="3" fill="#424242"/><rect x="9.500" y="10" width="4" height="3" fill="#424242"/></svg>
<div class="se" style="top:396px;letter-spacing:-0.15px">dsDropShipRetailer.xsd</div>
<svg style="left:60px;top:420px" width="5.6" height="7.2" viewBox="0 0 7 9"><path d="M1.5 4 V2.8 A2 2 0 0 1 5.5 2.8 V4" fill="none" stroke="#1ba1e2" stroke-width="1.3"/><rect x="0" y="3.6" width="7" height="5.4" fill="#1ba1e2"/><rect x="2.5" y="5" width="2" height="2.4" fill="#fff"/></svg>
<svg style="left:69px;top:416px" width="14" height="14" viewBox="0 0 14 14"><path d="M5 1.5h1M8 1.5h1M4.5 2v1M9.5 2v1M5 4.5h1M8 4.5h1" stroke="#424242" stroke-width="1" fill="none"/><path d="M7 5v3M2.5 11V8.5h9V11" stroke="#424242" stroke-width="1" fill="none"/><rect x="0.5" y="10" width="4" height="3" fill="#424242"/><rect x="9.500" y="10" width="4" height="3" fill="#424242"/></svg>
<div class="se" style="top:414px;letter-spacing:0.03px">dsGiftCertificate.xsd</div>
<svg style="left:60px;top:438px" width="5.6" height="7.2" viewBox="0 0 7 9"><path d="M1.5 4 V2.8 A2 2 0 0 1 5.5 2.8 V4" fill="none" stroke="#1ba1e2" stroke-width="1.3"/><rect x="0" y="3.6" width="7" height="5.4" fill="#1ba1e2"/><rect x="2.5" y="5" width="2" height="2.4" fill="#fff"/></svg>
<svg style="left:69px;top:434px" width="14" height="14" viewBox="0 0 14 14"><path d="M5 1.5h1M8 1.5h1M4.5 2v1M9.5 2v1M5 4.5h1M8 4.5h1" stroke="#424242" stroke-width="1" fill="none"/><path d="M7 5v3M2.5 11V8.5h9V11" stroke="#424242" stroke-width="1" fill="none"/><rect x="0.5" y="10" width="4" height="3" fill="#424242"/><rect x="9.500" y="10" width="4" height="3" fill="#424242"/></svg>
<div class="se" style="top:432px;letter-spacing:0.04px">dsOrder.xsd</div>
<svg style="left:60px;top:456px" width="5.6" height="7.2" viewBox="0 0 7 9"><path d="M1.5 4 V2.8 A2 2 0 0 1 5.5 2.8 V4" fill="none" stroke="#1ba1e2" stroke-width="1.3"/><rect x="0" y="3.6" width="7" height="5.4" fill="#1ba1e2"/><rect x="2.5" y="5" width="2" height="2.4" fill="#fff"/></svg>
<svg style="left:69px;top:452px" width="14" height="14" viewBox="0 0 14 14"><path d="M5 1.5h1M8 1.5h1M4.5 2v1M9.5 2v1M5 4.5h1M8 4.5h1" stroke="#424242" stroke-width="1" fill="none"/><path d="M7 5v3M2.5 11V8.5h9V11" stroke="#424242" stroke-width="1" fill="none"/><rect x="0.5" y="10" width="4" height="3" fill="#424242"/><rect x="9.500" y="10" width="4" height="3" fill="#424242"/></svg>
<div class="se" style="top:450px;letter-spacing:-0.08px">dsOrderAll.xsd</div>
<svg style="left:47px;top:471px" width="7" height="11" viewBox="0 0 7 11"><path d="M0.800 0.800 L5.500 5.500 L0.800 10.200 Z" fill="none" stroke="#1e1e1e" stroke-width="1"/></svg>
<svg style="left:60px;top:474px" width="5.6" height="7.2" viewBox="0 0 7 9"><path d="M1.5 4 V2.8 A2 2 0 0 1 5.5 2.8 V4" fill="none" stroke="#1ba1e2" stroke-width="1.3"/><rect x="0" y="3.6" width="7" height="5.4" fill="#1ba1e2"/><rect x="2.5" y="5" width="2" height="2.4" fill="#fff"/></svg>
<svg style="left:69px;top:470px" width="14" height="14" viewBox="0 0 14 14"><path d="M5 1.5h1M8 1.5h1M4.5 2v1M9.5 2v1M5 4.5h1M8 4.5h1" stroke="#424242" stroke-width="1" fill="none"/><path d="M7 5v3M2.5 11V8.5h9V11" stroke="#424242" stroke-width="1" fill="none"/><rect x="0.5" y="10" width="4" height="3" fill="#424242"/><rect x="9.500" y="10" width="4" height="3" fill="#424242"/></svg>
<div class="se" style="top:468px;letter-spacing:-0.03px">dsOrderDetailbyOrderID.xsd</div>
<svg style="left:47px;top:489px" width="7" height="11" viewBox="0 0 7 11"><path d="M0.800 0.800 L5.500 5.500 L0.800 10.200 Z" fill="none" stroke="#1e1e1e" stroke-width="1"/></svg>
<svg style="left:60px;top:492px" width="5.6" height="7.2" viewBox="0 0 7 9"><path d="M1.5 4 V2.8 A2 2 0 0 1 5.5 2.8 V4" fill="none" stroke="#1ba1e2" stroke-width="1.3"/><rect x="0" y="3.6" width="7" height="5.4" fill="#1ba1e2"/><rect x="2.5" y="5" width="2" height="2.4" fill="#fff"/></svg>
<svg style="left:69px;top:488px" width="14" height="14" viewBox="0 0 14 14"><path d="M5 1.5h1M8 1.5h1M4.5 2v1M9.5 2v1M5 4.5h1M8 4.5h1" stroke="#424242" stroke-width="1" fill="none"/><path d="M7 5v3M2.5 11V8.5h9V11" stroke="#424242" stroke-width="1" fill="none"/><rect x="0.5" y="10" width="4" height="3" fill="#424242"/><rect x="9.500" y="10" width="4" height="3" fill="#424242"/></svg>
<div class="se" style="top:486px;letter-spacing:-0.09px">dsOrderDetails.xsd</div>
<svg style="left:60px;top:510px" width="5.6" height="7.2" viewBox="0 0 7 9"><path d="M1.5 4 V2.8 A2 2 0 0 1 5.5 2.8 V4" fill="none" stroke="#1ba1e2" stroke-width="1.3"/><rect x="0" y="3.6" width="7" height="5.4" fill="#1ba1e2"/><rect x="2.5" y="5" width="2" height="2.4" fill="#fff"/></svg>
<svg style="left:69px;top:506px" width="14" height="14" viewBox="0 0 14 14"><path d="M5 1.5h1M8 1.5h1M4.5 2v1M9.5 2v1M5 4.5h1M8 4.5h1" stroke="#424242" stroke-width="1" fill="none"/><path d="M7 5v3M2.5 11V8.5h9V11" stroke="#424242" stroke-width="1" fill="none"/><rect x="0.5" y="10" width="4" height="3" fill="#424242"/><rect x="9.500" y="10" width="4" height="3" fill="#424242"/></svg>
<div class="se" style="top:504px;letter-spacing:-0.15px">dsPasswordReset.xsd</div>
<svg style="left:47px;top:525px" width="7" height="11" viewBox="0 0 7 11"><path d="M0.800 0.800 L5.500 5.500 L0.800 10.200 Z" fill="none" stroke="#1e1e1e" stroke-width="1"/></svg>
<svg style="left:60px;top:528px" width="5.6" height="7.2" viewBox="0 0 7 9"><path d="M1.5 4 V2.8 A2 2 0 0 1 5.5 2.8 V4" fill="none" stroke="#1ba1e2" stroke-width="1.3"/><rect x="0" y="3.6" width="7" height="5.4" fill="#1ba1e2"/><rect x="2.5" y="5" width="2" height="2.4" fill="#fff"/></svg>
<svg style="left:69px;top:524px" width="14" height="14" viewBox="0 0 14 14"><path d="M5 1.5h1M8 1.5h1M4.5 2v1M9.5 2v1M5 4.5h1M8 4.5h1" stroke="#424242" stroke-width="1" fill="none"/><path d="M7 5v3M2.5 11V8.5h9V11" stroke="#424242" stroke-width="1" fill="none"/><rect x="0.5" y="10" width="4" height="3" fill="#424242"/><rect x="9.500" y="10" width="4" height="3" fill="#424242"/></svg>
<div class="se" style="top:522px;letter-spacing:-0.08px">dsProduct.xsd</div>
<svg style="left:60px;top:546px" width="5.6" height="7.2" viewBox="0 0 7 9"><path d="M1.5 4 V2.8 A2 2 0 0 1 5.5 2.8 V4" fill="none" stroke="#1ba1e2" stroke-width="1.3"/><rect x="0" y="3.6" width="7" height="5.4" fill="#1ba1e2"/><rect x="2.5" y="5" width="2" height="2.4" fill="#fff"/></svg>
<svg style="left:69px;top:542px" width="14" height="14" viewBox="0 0 14 14"><path d="M5 1.5h1M8 1.5h1M4.5 2v1M9.5 2v1M5 4.5h1M8 4.5h1" stroke="#424242" stroke-width="1" fill="none"/><path d="M7 5v3M2.5 11V8.5h9V11" stroke="#424242" stroke-width="1" fill="none"/><rect x="0.5" y="10" width="4" height="3" fill="#424242"/><rect x="9.500" y="10" width="4" height="3" fill="#424242"/></svg>
<div class="se" style="top:540px;letter-spacing:0.01px">dsProductCategory.xsd</div>
<svg style="left:60px;top:564px" width="5.6" height="7.2" viewBox="0 0 7 9"><path d="M1.5 4 V2.8 A2 2 0 0 1 5.5 2.8 V4" fill="none" stroke="#1ba1e2" stroke-width="1.3"/><rect x="0" y="3.6" width="7" height="5.4" fill="#1ba1e2"/><rect x="2.5" y="5" width="2" height="2.4" fill="#fff"/></svg>
<svg style="left:69px;top:560px" width="14" height="14" viewBox="0 0 14 14"><path d="M5 1.5h1M8 1.5h1M4.5 2v1M9.5 2v1M5 4.5h1M8 4.5h1" stroke="#424242" stroke-width="1" fill="none"/><path d="M7 5v3M2.5 11V8.5h9V11" stroke="#424242" stroke-width="1" fill="none"/><rect x="0.5" y="10" width="4" height="3" fill="#424242"/><rect x="9.500" y="10" width="4" height="3" fill="#424242"/></svg>
<div class="se" style="top:558px;letter-spacing:-0.12px">dsProductDescription.xsd</div>
<svg style="left:47px;top:579px" width="7" height="11" viewBox="0 0 7 11"><path d="M0.800 0.800 L5.500 5.500 L0.800 10.200 Z" fill="none" stroke="#1e1e1e" stroke-width="1"/></svg>
<svg style="left:60px;top:582px" width="5.6" height="7.2" viewBox="0 0 7 9"><path d="M1.5 4 V2.8 A2 2 0 0 1 5.5 2.8 V4" fill="none" stroke="#1ba1e2" stroke-width="1.3"/><rect x="0" y="3.6" width="7" height="5.4" fill="#1ba1e2"/><rect x="2.5" y="5" width="2" height="2.4" fill="#fff"/></svg>
<svg style="left:69px;top:578px" width="14" height="14" viewBox="0 0 14 14"><path d="M5 1.5h1M8 1.5h1M4.5 2v1M9.5 2v1M5 4.5h1M8 4.5h1" stroke="#424242" stroke-width="1" fill="none"/><path d="M7 5v3M2.5 11V8.5h9V11" stroke="#424242" stroke-width="1" fill="none"/><rect x="0.5" y="10" width="4" height="3" fill="#424242"/><rect x="9.500" y="10" width="4" height="3" fill="#424242"/></svg>
<div class="se" style="top:576px;letter-spacing:-0.13px">dsProductRange.xsd</div>
<svg style="left:47px;top:597px" width="7" height="11" viewBox="0 0 7 11"><path d="M0.800 0.800 L5.500 5.500 L0.800 10.200 Z" fill="none" stroke="#1e1e1e" stroke-width="1"/></svg>
<svg style="left:60px;top:600px" width="5.6" height="7.2" viewBox="0 0 7 9"><path d="M1.5 4 V2.8 A2 2 0 0 1 5.5 2.8 V4" fill="none" stroke="#1ba1e2" stroke-width="1.3"/><rect x="0" y="3.6" width="7" height="5.4" fill="#1ba1e2"/><rect x="2.5" y="5" width="2" height="2.4" fill="#fff"/></svg>
<svg style="left:69px;top:596px" width="14" height="14" viewBox="0 0 14 14"><path d="M5 1.5h1M8 1.5h1M4.5 2v1M9.5 2v1M5 4.5h1M8 4.5h1" stroke="#424242" stroke-width="1" fill="none"/><path d="M7 5v3M2.5 11V8.5h9V11" stroke="#424242" stroke-width="1" fill="none"/><rect x="0.5" y="10" width="4" height="3" fill="#424242"/><rect x="9.500" y="10" width="4" height="3" fill="#424242"/></svg>
<div class="se" style="top:594px;letter-spacing:-0.16px">dsProductRanges.xsd</div>
<svg style="left:60px;top:618px" width="5.6" height="7.2" viewBox="0 0 7 9"><path d="M1.5 4 V2.8 A2 2 0 0 1 5.5 2.8 V4" fill="none" stroke="#1ba1e2" stroke-width="1.3"/><rect x="0" y="3.6" width="7" height="5.4" fill="#1ba1e2"/><rect x="2.5" y="5" width="2" height="2.4" fill="#fff"/></svg>
<svg style="left:69px;top:614px" width="14" height="14" viewBox="0 0 14 14"><path d="M5 1.5h1M8 1.5h1M4.5 2v1M9.5 2v1M5 4.5h1M8 4.5h1" stroke="#424242" stroke-width="1" fill="none"/><path d="M7 5v3M2.5 11V8.5h9V11" stroke="#424242" stroke-width="1" fill="none"/><rect x="0.5" y="10" width="4" height="3" fill="#424242"/><rect x="9.500" y="10" width="4" height="3" fill="#424242"/></svg>
<div class="se" style="top:612px;letter-spacing:-0.16px">dsProductRanking.xsd</div>
<svg style="left:47px;top:633px" width="7" height="11" viewBox="0 0 7 11"><path d="M0.800 0.800 L5.500 5.500 L0.800 10.200 Z" fill="none" stroke="#1e1e1e" stroke-width="1"/></svg>
<svg style="left:60px;top:636px" width="5.6" height="7.2" viewBox="0 0 7 9"><path d="M1.5 4 V2.8 A2 2 0 0 1 5.5 2.8 V4" fill="none" stroke="#1ba1e2" stroke-width="1.3"/><rect x="0" y="3.6" width="7" height="5.4" fill="#1ba1e2"/><rect x="2.5" y="5" width="2" height="2.4" fill="#fff"/></svg>
<svg style="left:69px;top:632px" width="14" height="14" viewBox="0 0 14 14"><path d="M5 1.5h1M8 1.5h1M4.5 2v1M9.5 2v1M5 4.5h1M8 4.5h1" stroke="#424242" stroke-width="1" fill="none"/><path d="M7 5v3M2.5 11V8.5h9V11" stroke="#424242" stroke-width="1" fill="none"/><rect x="0.5" y="10" width="4" height="3" fill="#424242"/><rect x="9.500" y="10" width="4" height="3" fill="#424242"/></svg>
<div class="se" style="top:630px;letter-spacing:-0.02px">dsRetailer.xsd</div>
<svg style="left:47px;top:651px" width="7" height="11" viewBox="0 0 7 11"><path d="M0.800 0.800 L5.500 5.500 L0.800 10.200 Z" fill="none" stroke="#1e1e1e" stroke-width="1"/></svg>
<svg style="left:60px;top:654px" width="5.6" height="7.2" viewBox="0 0 7 9"><path d="M1.5 4 V2.8 A2 2 0 0 1 5.5 2.8 V4" fill="none" stroke="#1ba1e2" stroke-width="1.3"/><rect x="0" y="3.6" width="7" height="5.4" fill="#1ba1e2"/><rect x="2.5" y="5" width="2" height="2.4" fill="#fff"/></svg>
<svg style="left:69px;top:650px" width="14" height="14" viewBox="0 0 14 14"><path d="M5 1.5h1M8 1.5h1M4.5 2v1M9.5 2v1M5 4.5h1M8 4.5h1" stroke="#424242" stroke-width="1" fill="none"/><path d="M7 5v3M2.5 11V8.5h9V11" stroke="#424242" stroke-width="1" fill="none"/><rect x="0.5" y="10" width="4" height="3" fill="#424242"/><rect x="9.500" y="10" width="4" height="3" fill="#424242"/></svg>
<div class="se" style="top:648px;letter-spacing:-0.07px">dsRetailerCredit.xsd</div>
<svg style="left:47px;top:669px" width="7" height="11" viewBox="0 0 7 11"><path d="M0.800 0.800 L5.500 5.500 L0.800 10.200 Z" fill="none" stroke="#1e1e1e" stroke-width="1"/></svg>
<svg style="left:60px;top:672px" width="5.6" height="7.2" viewBox="0 0 7 9"><path d="M1.5 4 V2.8 A2 2 0 0 1 5.5 2.8 V4" fill="none" stroke="#1ba1e2" stroke-width="1.3"/><rect x="0" y="3.6" width="7" height="5.4" fill="#1ba1e2"/><rect x="2.5" y="5" width="2" height="2.4" fill="#fff"/></svg>
<svg style="left:69px;top:668px" width="14" height="14" viewBox="0 0 14 14"><path d="M5 1.5h1M8 1.5h1M4.5 2v1M9.5 2v1M5 4.5h1M8 4.5h1" stroke="#424242" stroke-width="1" fill="none"/><path d="M7 5v3M2.5 11V8.5h9V11" stroke="#424242" stroke-width="1" fill="none"/><rect x="0.5" y="10" width="4" height="3" fill="#424242"/><rect x="9.500" y="10" width="4" height="3" fill="#424242"/></svg>
<div class="se" style="top:666px;letter-spacing:-0.05px">dsUser.xsd</div>
<svg style="left:60px;top:690px" width="5.6" height="7.2" viewBox="0 0 7 9"><path d="M1.5 4 V2.8 A2 2 0 0 1 5.5 2.8 V4" fill="none" stroke="#1ba1e2" stroke-width="1.3"/><rect x="0" y="3.6" width="7" height="5.4" fill="#1ba1e2"/><rect x="2.5" y="5" width="2" height="2.4" fill="#fff"/></svg>
<svg style="left:69px;top:686px" width="14" height="14" viewBox="0 0 14 14"><path d="M5 1.5h1M8 1.5h1M4.5 2v1M9.5 2v1M5 4.5h1M8 4.5h1" stroke="#424242" stroke-width="1" fill="none"/><path d="M7 5v3M2.5 11V8.5h9V11" stroke="#424242" stroke-width="1" fill="none"/><rect x="0.5" y="10" width="4" height="3" fill="#424242"/><rect x="9.500" y="10" width="4" height="3" fill="#424242"/></svg>
<div class="se" style="top:684px;letter-spacing:-0.09px">dsUserType.xsd</div>
<svg style="left:60px;top:708px" width="5.6" height="7.2" viewBox="0 0 7 9"><path d="M1.5 4 V2.8 A2 2 0 0 1 5.5 2.8 V4" fill="none" stroke="#1ba1e2" stroke-width="1.3"/><rect x="0" y="3.6" width="7" height="5.4" fill="#1ba1e2"/><rect x="2.5" y="5" width="2" height="2.4" fill="#fff"/></svg>
<svg style="left:69px;top:704px" width="14" height="14" viewBox="0 0 14 14"><path d="M5 1.5h1M8 1.5h1M4.5 2v1M9.5 2v1M5 4.5h1M8 4.5h1" stroke="#424242" stroke-width="1" fill="none"/><path d="M7 5v3M2.5 11V8.5h9V11" stroke="#424242" stroke-width="1" fill="none"/><rect x="0.5" y="10" width="4" height="3" fill="#424242"/><rect x="9.500" y="10" width="4" height="3" fill="#424242"/></svg>
<div class="se" style="top:702px;letter-spacing:-0.18px">dsViewOrderAllDetails.xsd</div>
<svg style="left:60px;top:726px" width="5.6" height="7.2" viewBox="0 0 7 9"><path d="M1.5 4 V2.8 A2 2 0 0 1 5.5 2.8 V4" fill="none" stroke="#1ba1e2" stroke-width="1.3"/><rect x="0" y="3.6" width="7" height="5.4" fill="#1ba1e2"/><rect x="2.5" y="5" width="2" height="2.4" fill="#fff"/></svg>
<svg style="left:69px;top:722px" width="14" height="14" viewBox="0 0 14 14"><path d="M5 1.5h1M8 1.5h1M4.5 2v1M9.5 2v1M5 4.5h1M8 4.5h1" stroke="#424242" stroke-width="1" fill="none"/><path d="M7 5v3M2.5 11V8.5h9V11" stroke="#424242" stroke-width="1" fill="none"/><rect x="0.5" y="10" width="4" height="3" fill="#424242"/><rect x="9.500" y="10" width="4" height="3" fill="#424242"/></svg>
<div class="se" style="top:720px;letter-spacing:-0.11px">dsWebSiteOrders.xsd</div>
<svg style="left:60px;top:744px" width="5.6" height="7.2" viewBox="0 0 7 9"><path d="M1.5 4 V2.8 A2 2 0 0 1 5.5 2.8 V4" fill="none" stroke="#1ba1e2" stroke-width="1.3"/><rect x="0" y="3.6" width="7" height="5.4" fill="#1ba1e2"/><rect x="2.5" y="5" width="2" height="2.4" fill="#fff"/></svg>
<div class="a" style="left:68px;top:741px;width:12px;height:11px;font-weight:bold;font-size:9.5px;line-height:11px;letter-spacing:-0.8px;color:#0e4d9a;text-align:center;">VB</div>
<div class="se" style="top:738px;letter-spacing:-0.21px">FindBaseClassRecursively.vb</div>
</div>
<div class="a" style="left:239px;top:0;width:16px;height:751px;background:#e8e8ec"></div>
<div class="a" style="left:242px;top:61px;width:9px;height:202px;background:#c2c3c9"></div>
<div class="a" style="left:0;top:751px;width:255px;height:18px;background:#e8e8ec"></div>
<div class="a" style="left:16px;top:756px;width:179px;height:9px;background:#c2c3c9"></div>
</div>
<!-- se tabs -->
<div class="a" style="left:1018px;top:924px;width:255px;height:20px;background:#4d6082"></div>
<div class="a" style="left:1120px;top:924px;width:50px;height:20px;background:#fff"></div>
<div class="t w" style="left:1021px;top:928px">Call Hi...</div>
<div class="t w" style="left:1072px;top:928px">Proper...</div>
<div class="t" style="left:1125px;top:927px">Soluti...</div>
<div class="t w" style="left:1174px;top:928px">Class...</div>
<div class="t w" style="left:1227px;top:928px">Team...</div>
<div class="a" style="left:1222px;top:925px;width:1px;height:19px;background:#3a4c6c"></div>
<!-- SE toolbar icons -->
<div class="a" style="left:1205px;top:107px;width:23px;height:24px;background:#fff29d;border:1px solid #e5c365"></div>
<div class="a" style="left:1262px;top:105px;width:11px;height:28px;background:#e3e6f0"></div>
<svg style="left:1018px;top:105px" width="255" height="52" viewBox="1018 105 255 52">
<circle cx="1033" cy="119" r="6" fill="#b4b8c4"/><path d="M1036.500 119h-6M1033 116l-3 3l3 3" stroke="#d6dbe9" stroke-width="1.600" fill="none"/>
<circle cx="1055" cy="119" r="6" fill="#b4b8c4"/><path d="M1051.500 119h6M1055 116l3 3l-3 3" stroke="#d6dbe9" stroke-width="1.600" fill="none"/>
<path d="M1070 119l7-6.500l7 6.500M1072 118v7.500h10V118M1080.500 113v2.500" fill="none" stroke="#1e1e1e" stroke-width="1.300"/><rect x="1075.500" y="120.500" width="3.500" height="5" fill="#1e1e1e"/>
<path d="M1091.500 109V128.500M1121.500 109V128.500M1230.500 109V128.500" stroke="#7f8ba8" stroke-width="1"/>
<path d="M1101.500 116a3.600 3.600 0 0 1 6.500-2M1108.500 116.500a3.600 3.600 0 0 1-6.300 2" fill="none" stroke="#4a4a4a" stroke-width="1.100"/><path d="M1109.500 112v3.300h-3.300zM1100.500 120.500v-3.300h3.300z" fill="#4a4a4a"/>
<circle cx="1109.800" cy="121.800" r="2.800" fill="#0fc10f" stroke="#0a8a0a" stroke-width=".6"/><circle cx="1109" cy="121" r="1" fill="#9dff9d"/>
<circle cx="1140" cy="120" r="4.600" fill="none" stroke="#1e1e1e" stroke-width="1.200"/><path d="M1140 117v3.200h2.500" fill="none" stroke="#1e1e1e" stroke-width="1.100"/><path d="M1132.500 112h4.500l-2.200 2.500z" fill="#1e1e1e"/><path d="M1134.800 114v2" stroke="#1e1e1e" stroke-width="1"/>
<path d="M1152 118h6l-3 3z" fill="#1e1e1e"/>
<path d="M1176 118a4.500 4.500 0 1 1 -4.500 -3" fill="none" stroke="#b4b8c4" stroke-width="1.800"/><path d="M1170.500 111.500l4.500 3l-4.500 3.500z" fill="#b4b8c4"/>
<path d="M1193.500 115.500v-2h7v6h-2" fill="none" stroke="#1e1e1e" stroke-width="1"/><path d="M1191.500 117.500v-2h7v6h-2" fill="none" stroke="#1e1e1e" stroke-width="1"/><rect x="1189.500" y="117.500" width="7" height="6" fill="#e8ebf4" stroke="#1e1e1e" stroke-width="1"/><path d="M1191 120.500h4" stroke="#0e4e9e" stroke-width="1.400"/>
<path d="M1209.500 116.500h5l2.500 2.500v6h-7.500z" fill="none" stroke="#1e1e1e" stroke-width="1.200"/><path d="M1217.500 116.500v-4h3.500l2 2v3" fill="none" stroke="#1e1e1e" stroke-width="1"/><path d="M1223 118.500v6.500M1219.500 125h3.500" fill="none" stroke="#1e1e1e" stroke-width="1" stroke-dasharray="1 1"/>
<path d="M1240 125.500l6.500-6.500" stroke="#1e1e1e" stroke-width="3" stroke-linecap="round"/><path d="M1250 112.800a3.800 3.800 0 1 0 2.600 4.400l-2.900.9l-1.800-1.800z" fill="#1e1e1e"/>
<path d="M1265 111l2 1.500l-2 1.500zM1268.500 111l2 1.500l-2 1.500z" fill="#1e1e1e"/>
<circle cx="1253" cy="141.500" r="3.200" fill="none" stroke="#555" stroke-width="1.500"/><path d="M1250.800 144l-4.800 4.800" stroke="#555" stroke-width="1.900"/>
<path d="M1262.500 141h6l-3 3z" fill="#555"/>
</svg>
<!-- doc tab + panel title icons -->
<svg style="left:0;top:80px" width="1280" height="30" viewBox="0 80 1280 30">
<defs>
<g id="lock"><path d="M1.200 3.500V2.200a1.600 1.600 0 0 1 3.200 0V3.500" fill="none" stroke-width="1.100"/><path d="M0 3.200h5.600v3.800H0zM2.200 4.300v1.600h1.200V4.300z" stroke="none" fill-rule="evenodd"/></g>
<g id="pinv"><path d="M1.500 0.500h4v5h-4zM4.500 0.500v5M0 6h7M3.500 6v4" fill="none" stroke-width="1.100"/></g>
<g id="xx"><path d="M0 0l8 8M8 0l-8 8" fill="none" stroke-width="1.400"/></g>
</defs>
<use href="#lock" x="101" y="91" fill="#1e1e1e" stroke="#1e1e1e"/>
<use href="#lock" x="297" y="91" fill="#fff" stroke="#fff"/>
<use href="#lock" x="422" y="91" fill="#fff" stroke="#fff"/>
<!-- pin horizontal -->
<path d="M118 95h3.500M121.500 91.500v6.500M121.500 92.500h4.500v4h-4.500M121.500 95.500h4.500" fill="none" stroke="#4a4320" stroke-width="1.100"/>
<use href="#xx" x="133" y="91" stroke="#4a4320"/>
<!-- doc well dropdown -->
<path d="M1000 92.500h7l-3.500 3.500z" fill="#d6dbe9"/>
<!-- left panel title -->
<use href="#pinv" x="11" y="90" stroke="#fff"/><path d="M20 92l7 7M27 92l-7 7" stroke="#fff" stroke-width="1.200"/>
<path d="M27 109.500l2 1.500l-2 1.500zM30.500 109.500l2 1.500l-2 1.500z" fill="#1e1e1e"/>
<!-- SE title -->
<path d="M1231 94h7l-3.500 3.500z" fill="#fff"/>
<use href="#pinv" x="1245" y="90" stroke="#fff"/>
<use href="#xx" x="1258" y="92" stroke="#fff"/>
</svg>
<!-- scrollbar arrows -->
<svg style="left:0;top:0" width="1280" height="950" viewBox="0 0 1280 950">
<g fill="#868999">
<path d="M998 132.500h8l-4-4.500z"/>
<path d="M998 759h8l-4 4.500z"/>
<path d="M114 773v8l-4.500-4z"/>
<path d="M984 773v8l4.500-4z"/>
<path d="M998 849.500h8l-4-4.500z"/>
<path d="M998 897h8l-4 4.500z"/>
<path d="M54 911.500v8l-4.500-4z"/>
<path d="M984 911.500v8l4.500-4z"/>
<path d="M1261 167.500h8l-4-4.500z"/>
<path d="M1261 896.500h8l-4 4.500z"/>
<path d="M1028 912v8l-4.500-4z"/>
<path d="M1247 912v8l4.500-4z"/>
<path d="M19.500 930v8l-5-4zM27 930v8l5-4z"/>
</g>
<path d="M94 775.500h6l-3 3z" fill="#1e1e1e"/>
<!-- split button -->
<path d="M996 111.500h11M996 113.500h11" stroke="#1e1e1e" stroke-width="1"/><path d="M1001.500 107v4M1001.500 114v4" stroke="#1e1e1e" stroke-width="1"/><path d="M999 109.500l2.500-3.500l2.500 3.500zM999 115.500l2.500 3.500l2.500-3.500z" fill="#1e1e1e"/>
<!-- current frame arrow -->
<path d="M47 157.500h7l3.500 2.500l-3.500 2.500h-7z" fill="#3a3a3a"/>
</svg>
<!-- status bar -->
<div class="a" style="left:0;top:950px;width:1280px;height:22px;background:#ca5100"></div>
<div class="t w" style="left:3px;top:955px">Ready</div>
<div class="t w" style="left:518.500px;top:955px;letter-spacing:0.25px">Ln 223</div>
<div class="t w" style="left:611px;top:955px">Col 17</div>
<div class="t w" style="left:703px;top:955px">Ch 17</div>
<div class="t w" style="left:839px;top:955px">INS</div>
<div class="t w" style="left:980px;top:953px">40</div>
<div class="t w" style="left:1036px;top:953px">12</div>
<div class="t w" style="left:1091.500px;top:953px;letter-spacing:0.22px">test-giftrepublic</div>
<div class="t w" style="left:1211px;top:953px;letter-spacing:0.5px">master</div>
<svg style="left:950px;top:950px" width="330" height="22" viewBox="950 950 330 22">
<path d="M966 966.500v-10M962 960l4-4.300l4 4.300" fill="none" stroke="#f4e6dc" stroke-width="1.700"/>
<path d="M1017.500 966l1-3.500l6.500-6.500l2.500 2.500l-6.500 6.500z" fill="#eadcd0"/><path d="M1025.500 955.500l1-1l2.500 2.500l-1 1z" fill="#eadcd0"/>
<path d="M1078 954.500l6.700 6.700l-6.700 6.700l-6.700-6.700z" fill="#eadcd0"/><path d="M1076 958l4 4M1078 960v4.500" stroke="#ca5100" stroke-width="1.100"/><circle cx="1080" cy="962" r="1.100" fill="#ca5100"/><circle cx="1078" cy="964.500" r="1.100" fill="#ca5100"/>
<path d="M1198 967v-4l-4.500-5M1198 963l4.500-5" fill="none" stroke="#f4e6dc" stroke-width="1.800"/><path d="M1191 955.500h4.500v4.500zM1205 955.500h-4.500v4.500z" fill="#f4e6dc"/>
<path d="M1251 963.500h8l-4-4.500z" fill="#fff"/>
</svg>
<!-- taskbar -->
<div class="a" style="left:0;top:972px;width:1280px;height:52px;background:#d5d2cb;border-top:2px solid #fbfaf8"></div>
<svg style="left:0;top:972px" width="1280" height="52" viewBox="0 972 1280 52">
<rect x="2" y="976" width="52" height="22" fill="#d4d0c8"/><path d="M2.5 998V976.5H54" fill="none" stroke="#fff" stroke-width="1"/><path d="M3 996.5H52.5V977" fill="none" stroke="#808080" stroke-width="1"/><path d="M2 997.5H53.5V976" fill="none" stroke="#404040" stroke-width="1"/>
<path d="M6.500 980.500c2-1.500 4-1.500 6 0l-1.200 5c-2-1.500-4-1.500-6 0z" fill="#e8472b"/><path d="M13.500 981c2 1.200 4 1.200 6-.3l-1.200 5c-2 1.500-4 1.500-6 .3z" fill="#6cb33f"/><path d="M5 986.800c2-1.500 4-1.500 6 0l-1.200 5c-2-1.500-4-1.500-6 0z" fill="#3b8ed8"/><path d="M12 987.300c2 1.200 4 1.200 6-.3l-1.200 5c-2 1.500-4 1.500-6 .3z" fill="#f6c22d"/>
<text x="21.500" y="991" font-family="Liberation Sans" font-weight="bold" font-size="12" letter-spacing="0.400" fill="#000">Start</text>
<rect x="97" y="976" width="32" height="22" fill="#d4d0c8"/><path d="M97.5 998V976.5H129" fill="none" stroke="#fff" stroke-width="1"/><path d="M98 996.5H127.5V977" fill="none" stroke="#808080" stroke-width="1"/><path d="M97 997.5H128.5V976" fill="none" stroke="#404040" stroke-width="1"/>
<rect x="165" y="976" width="32" height="22" fill="#d4d0c8"/><path d="M165.5 998V976.5H197" fill="none" stroke="#fff" stroke-width="1"/><path d="M166 996.5H195.5V977" fill="none" stroke="#808080" stroke-width="1"/><path d="M165 997.5H196.5V976" fill="none" stroke="#404040" stroke-width="1"/>
<rect x="301" y="976" width="32" height="22" fill="#d4d0c8"/><path d="M301.5 998V976.5H333" fill="none" stroke="#fff" stroke-width="1"/><path d="M302 996.5H331.5V977" fill="none" stroke="#808080" stroke-width="1"/><path d="M301 997.5H332.5V976" fill="none" stroke="#404040" stroke-width="1"/>
<rect x="369" y="976" width="32" height="22" fill="#d4d0c8"/><path d="M369.5 998V976.5H401" fill="none" stroke="#fff" stroke-width="1"/><path d="M370 996.5H399.5V977" fill="none" stroke="#808080" stroke-width="1"/><path d="M369 997.5H400.5V976" fill="none" stroke="#404040" stroke-width="1"/>
<rect x="471" y="976" width="32" height="22" fill="#d4d0c8"/><path d="M471.5 998V976.5H503" fill="none" stroke="#fff" stroke-width="1"/><path d="M472 996.5H501.5V977" fill="none" stroke="#808080" stroke-width="1"/><path d="M471 997.5H502.5V976" fill="none" stroke="#404040" stroke-width="1"/>
<rect x="913" y="976" width="32" height="22" fill="#d4d0c8"/><path d="M913.5 998V976.5H945" fill="none" stroke="#fff" stroke-width="1"/><path d="M914 996.5H943.5V977" fill="none" stroke="#808080" stroke-width="1"/><path d="M913 997.5H944.5V976" fill="none" stroke="#404040" stroke-width="1"/>
<rect x="335" y="976" width="32" height="22" fill="#fcfcfb"/><path d="M335.5 998V976.5H367" fill="none" stroke="#404040" stroke-width="1"/><path d="M336.5 997V977.5H366" fill="none" stroke="#808080" stroke-width="1"/><path d="M335 997.5H366.5V976" fill="none" stroke="#fff" stroke-width="1"/>
<rect x="267" y="1000" width="32" height="22" fill="#d4d0c8"/><path d="M267.5 1022V1000.5H299" fill="none" stroke="#fff" stroke-width="1"/><path d="M268 1020.5H297.5V1001" fill="none" stroke="#808080" stroke-width="1"/><path d="M267 1021.5H298.5V1000" fill="none" stroke="#404040" stroke-width="1"/>
<rect x="471" y="1000" width="32" height="22" fill="#d4d0c8"/><path d="M471.5 1022V1000.5H503" fill="none" stroke="#fff" stroke-width="1"/><path d="M472 1020.5H501.5V1001" fill="none" stroke="#808080" stroke-width="1"/><path d="M471 1021.5H502.5V1000" fill="none" stroke="#404040" stroke-width="1"/>
<rect x="505" y="1000" width="32" height="22" fill="#d4d0c8"/><path d="M505.5 1022V1000.5H537" fill="none" stroke="#fff" stroke-width="1"/><path d="M506 1020.5H535.5V1001" fill="none" stroke="#808080" stroke-width="1"/><path d="M505 1021.5H536.5V1000" fill="none" stroke="#404040" stroke-width="1"/>
<rect x="539" y="1000" width="32" height="22" fill="#d4d0c8"/><path d="M539.5 1022V1000.5H571" fill="none" stroke="#fff" stroke-width="1"/><path d="M540 1020.5H569.5V1001" fill="none" stroke="#808080" stroke-width="1"/><path d="M539 1021.5H570.5V1000" fill="none" stroke="#404040" stroke-width="1"/>
<rect x="369" y="1000" width="32" height="22" fill="#14206e"/><path d="M369.5 1022V1000.5H401" fill="none" stroke="#404040" stroke-width="1"/><path d="M370.5 1021V1001.5H400" fill="none" stroke="#808080" stroke-width="1"/><path d="M369 1021.5H400.5V1000" fill="none" stroke="#fff" stroke-width="1"/>
<rect x="71" y="981" width="16" height="12" fill="#000"/><rect x="71" y="981" width="16" height="2" fill="#8a8a8a"/><text x="72" y="991" font-family="Liberation Sans" font-weight="bold" font-size="7" fill="#fff">C:\_</text>
<circle cx="113" cy="987" r="8" fill="#ff8a1c"/><path d="M113 979a8 8 0 0 1 8 8a8 8 0 0 1-6 7.700c3.500-4 2.500-9.500-2-11.500z" fill="#ffcb2e"/><path d="M105.500 984.500a8 8 0 0 0 4 9.600c-2-3-2-6 0-8z" fill="#e8452b"/><circle cx="112.300" cy="986.800" r="3.600" fill="#4a4fc8"/><path d="M108 985c2-.5 3.500 1 5.500 1c1.500 0 1 2-.5 2.300c-2 .4-3 1.500-2.500 3.500c-2-1-3.500-4-2.500-6.800z" fill="#ff9a1c"/>
<path d="M141.500 980.500h12l1.500 12h-14z" fill="#f3ecd0"/><path d="M140.500 980h12l.5 12.500h-13.500z" fill="#9fd3ea"/><path d="M141.500 983.500h10M141.500 986h10M141.500 988.500h10" stroke="#79b8d6" stroke-width=".8"/><path d="M141 980h11" stroke="#4a7f9c" stroke-width="1.400" stroke-dasharray="1 1"/>
<path d="M176 981c2-1.500 4-1 5.500 0l-1 5c-1.500-1-3.500-1-5.500 0z" fill="#e8472b"/><path d="M182.500 981c2 1 4 1 6-.5l-1.200 5.500c-2 1.500-4 1-6 0z" fill="#6cb33f"/><path d="M174.500 988c2-1.500 4-1 5.500 0l-1 5c-1.500-1-3.500-1-5.500 0z" fill="#3b6ed8"/><path d="M181 988.500c2 1 4 1 6-.5l-1.200 5.500c-2 1.500-4 1-6 0z" fill="#f6c22d"/><circle cx="178.500" cy="985.500" r="3.300" fill="#dff0fa" stroke="#6f9fd0" stroke-width="1"/>
<rect x="207" y="979.500" width="16" height="14.500" rx="1.500" fill="#2a2020"/><text x="210.500" y="990.500" font-family="Liberation Sans" font-weight="bold" font-size="9" fill="#e6e0d8">F</text><text x="216" y="990.500" font-family="Liberation Sans" font-weight="bold" font-size="7" fill="#e6e0d8">B</text>
<rect x="241.500" y="979.500" width="6" height="9" rx="2" fill="#f2c230"/><ellipse cx="244.500" cy="980.500" rx="3" ry="1.200" fill="#fbe58a"/><rect x="242.500" y="980.500" width="13" height="13" fill="none" stroke="#58c322" stroke-width="1" stroke-dasharray="1 1.200"/><path d="M247 985l9 8M255.500 984.500l-8 9" stroke="#7c8aa0" stroke-width="1.800"/><circle cx="254" cy="986" r="2" fill="#c8d4e4" stroke="#7c8aa0" stroke-width=".8"/>
<path d="M283 987.500c-2-3-5.500-3.500-6.500 0c1 3.500 4.500 3 6.500 0z" fill="none" stroke="#2e6fd0" stroke-width="2.200"/><path d="M283 987.500c2-3 5.500-3.500 6.500 0c-1 3.500-4.500 3-6.500 0z" fill="none" stroke="#7a3fc0" stroke-width="2.200"/>
<rect x="309.500" y="979.500" width="8" height="10.500" rx="2.500" fill="#f2c230"/><ellipse cx="313.500" cy="980.800" rx="4" ry="1.500" fill="#fdf0b0"/><path d="M320 980.500h3.500v3.500M313 994h-3.500v-3" fill="none" stroke="#3aa335" stroke-width="1.300"/><path d="M316.500 987l7 6.500M323.500 987l-7 6.500" stroke="#2a2a2a" stroke-width="1.300"/>
<path d="M354.500 980l4 1.700v10.600l-4 1.700l-6.300-6l-3 2.400l-1.400-.7v-5.400l1.400-.7l3 2.400zM354.500 984.200l-3.700 2.800l3.700 2.800zM345.500 985.500v3l1.700-1.500z" fill="#fff" stroke="#7a2d96" stroke-width="1.500" stroke-linejoin="round"/>
<rect x="377" y="979.500" width="16" height="15" rx="2.500" fill="#151515"/><rect x="378" y="980.500" width="14" height="6" rx="2" fill="#3a3a3a"/><text x="378.500" y="991" font-family="Liberation Sans" font-weight="bold" font-size="7" fill="#2f7fe0">m</text><text x="384" y="991.500" font-family="Liberation Sans" font-weight="bold" font-size="10" fill="#f2f2f2">R</text>
<rect x="412" y="981" width="13" height="13" rx="3" fill="#fafafa" stroke="#e0ddd8" stroke-width=".6"/><path d="M417.500 992c1-5 4-10 9.500-12.500c.5 5-3 10-7.500 12z" fill="#f29a2e"/><path d="M423 982c1.500-1.500 3-2.300 4-2.500c.3 2-.5 4-1.500 5.500z" fill="#3c9a3c"/><path d="M417.500 992l-1.500 2" stroke="#2e6fd0" stroke-width="1.200"/><path d="M420 990c2-2 4-5 5-8" stroke="#f6dc3a" stroke-width="1.200" fill="none"/>
<path d="M445 979h13.500l1.500 1.500v13.500h-15z" fill="#0a10e0"/><rect x="448" y="979" width="8" height="4.500" fill="#f4f4ff"/><rect x="453" y="979.500" width="2" height="3.500" fill="#0a10e0"/><rect x="446.500" y="985" width="12" height="8.500" fill="#fff"/><path d="M446.500 986.200h12M446.500 989.300h12M446.500 992.400h12" stroke="#e01818" stroke-width="1.600"/><path d="M445 979v15h15" fill="none" stroke="#000" stroke-width=".8"/>
<path d="M480.500 980.500h9l3 3v11h-12z" fill="#fdfdfd" stroke="#8a8a8a" stroke-width=".8"/><rect x="481.300" y="986.500" width="10.400" height="7.300" fill="#57c22a"/><rect x="481.300" y="991" width="10.400" height="2.800" fill="#2f8f1c"/><path d="M482 980.500h7" stroke="#444" stroke-width="1" stroke-dasharray="1 1"/><path d="M495 980.500l-6.500 10.500" stroke="#f08a1c" stroke-width="2.600"/><path d="M488.500 991l-1 2.500l2.200-1.500z" fill="#333"/><circle cx="495.300" cy="980" r="1.200" fill="#c81e1e"/>
<circle cx="521" cy="987" r="7.600" fill="#b48fd0" stroke="#111" stroke-width="1.300"/><path d="M521 987l-6.500 3.500a7.400 7.400 0 0 0 13 0z" fill="#b0764a"/><path d="M521 987l6.500-3.500a7.400 7.400 0 0 0-13 0z" fill="#c9b8ee"/><circle cx="521" cy="987" r="2.200" fill="#efeaf5" stroke="#9a8ab0" stroke-width=".6"/>
<rect x="547.500" y="979.500" width="15" height="14" rx="1" fill="#8c90a8"/><path d="M549.500 983h4l1 1.200h6v7.300h-11z" fill="#fbfbfd"/><rect x="550" y="992.300" width="2" height="1" fill="#d0d0da"/><rect x="558" y="992.300" width="2" height="1" fill="#d0d0da"/>
<rect x="581" y="979" width="16" height="16" fill="#b30f0f"/><text x="582.500" y="992" font-family="Liberation Sans" font-weight="bold" font-style="italic" font-size="12" fill="#fff" letter-spacing="-0.5">Fz</text>
<circle cx="623" cy="987" r="7.800" fill="#2b7fd1"/><path d="M616.500 985.500c2-2 3.500-1.500 5 0c1.500-2 4-2.500 6.500-1.500c-2.500.3-3.500 1.500-4.500 3c-2-.8-4.500-1.500-7-1.500z" fill="#fff"/><path d="M617 990.500c2-1.500 3.500-1 4.500 0c1.500-1.500 3.500-2 5.500-1.200c-2 .3-3 1.200-4 2.500c-1.800-.8-4-1.300-6-1.300z" fill="#fff"/>
<path d="M650 984l4-3l6 10l-3.500 2.500z" fill="#2e6fd0"/><circle cx="659" cy="983" r="3.500" fill="#555"/><circle cx="661" cy="989" r="4.300" fill="#c4c8d4" stroke="#8a8fa0" stroke-width=".7"/><circle cx="658.500" cy="982.500" r="1.200" fill="#ddd"/><path d="M655 987l3 6" stroke="#9ac0ee" stroke-width="1.500"/>
<path d="M684 983.500l12.500-3.500l.8 3l-12.500 3.500z" fill="#222"/><path d="M686 983l2 2M690 982l2 2M694 981l2 2" stroke="#fff" stroke-width="1"/><rect x="684.500" y="986" width="13" height="8" fill="#f6f6f6" stroke="#222" stroke-width="1"/><text x="685.500" y="993" font-family="Liberation Sans" font-weight="bold" font-size="7" fill="#e07020" letter-spacing="0.300">3</text><text x="689.800" y="993" font-family="Liberation Sans" font-weight="bold" font-size="7" fill="#2e6fd0">2</text><text x="693.600" y="993" font-family="Liberation Sans" font-weight="bold" font-size="7" fill="#2a9a2a">1</text>
<circle cx="722.500" cy="986" r="6.500" fill="#4a4a4a" stroke="#222" stroke-width=".8"/><circle cx="722.500" cy="982.500" r="1.600" fill="#eee"/><circle cx="719.300" cy="985.500" r="1.600" fill="#eee"/><circle cx="725.700" cy="985.500" r="1.600" fill="#eee"/><circle cx="720.500" cy="989.500" r="1.600" fill="#eee"/><circle cx="724.500" cy="989.500" r="1.600" fill="#eee"/><path d="M727 981.500c2 2 3 5 3 8l-3 1z" fill="#e8c020"/><path d="M726 990c2-2 4-1.500 6 1c-1 2.500-4 3.500-6.500 2.500z" fill="#d03a1a"/><path d="M726.500 984l3 4l-2.500 3z" fill="#3a9a3a"/>
<path d="M759 979.500l4.500 12h-9z" fill="#f48a12"/><path d="M757.300 984h3.400l.9 2.500h-5.200zM755.800 988.500h6.400l.7 2h-7.800z" fill="#f6f0ea"/><path d="M752.500 991.500h13l1 3h-15z" fill="#f48a12"/><path d="M752.500 993.500h13" stroke="#d06a00" stroke-width="1"/>
<circle cx="790.500" cy="984.500" r="3.600" fill="none" stroke="#111" stroke-width="2.400" stroke-dasharray="2 1.300"/><circle cx="790.500" cy="984.500" r="2.600" fill="none" stroke="#111" stroke-width="1.200"/><path d="M794.500 980.500h6.500v14h-7v-5" fill="none" stroke="#111" stroke-width="1.300"/><path d="M794 985.500h7M794 990h7" stroke="#111" stroke-width="1"/><rect x="795" y="986.500" width="5" height="3" fill="#bbb"/><rect x="795" y="991" width="5" height="2.500" fill="#bbb"/>
<path d="M821 989a6 6.500 0 0 1 12 0" fill="none" stroke="#1a2aa8" stroke-width="1.800"/><rect x="819.800" y="986.500" width="3" height="6.500" rx="1.400" fill="#1a2aa8"/><rect x="831.200" y="986.500" width="3" height="6.500" rx="1.400" fill="#1a2aa8"/><path d="M823.500 992.500c0-6 1.500-8.500 3.500-8.500s3.500 2.500 3.500 8.500z" fill="#f6c820"/><path d="M823.300 989.500h7.400" stroke="#e02a1a" stroke-width="1.400"/>
<circle cx="861" cy="987" r="7" fill="#3a2f7a"/><circle cx="859.500" cy="987" r="6.600" fill="#b8a8d8" opacity=".35"/><path d="M854.200 985.300h13.600M854 987.500h14M854.300 989.600h13.400" stroke="#e8e4f4" stroke-width=".9"/>
<rect x="887.500" y="979.500" width="15" height="15" rx="1.500" fill="#2e8bc0" stroke="#1a4f78" stroke-width="1"/><path d="M888.500 990.500c4 0 4-8 8-8.500c-1.500 3-.5 6 2.500 8.500z" fill="none" stroke="#123a5c" stroke-width="1.200"/><path d="M888 991.500h14" stroke="#1f6a98" stroke-width="1"/>
<path d="M921 984l3 1l1-3l2 2.500l2.500-2.500l.5 3.500l3.500-.5l-2 3l3 1.500l-3.500 1l-2 3h-7l-1.500-3l-3.500-1l3-1.500z" fill="#f6b818"/><circle cx="929" cy="988.500" r="3" fill="#fff"/><circle cx="929" cy="988.500" r="1.800" fill="#e0301a"/><circle cx="929" cy="988.500" r=".8" fill="#fff"/>
<path d="M955 990l6.500-6.500h3.500l-2 2.500c3.500.5 6 2.500 6 5s-2.500 4-5.500 4s-5.500-1.500-5.500-3.500z" fill="#f08a18"/><circle cx="963.500" cy="990.500" r="2.800" fill="#fff"/><circle cx="963.500" cy="990.500" r="1.600" fill="#2a5fae"/><path d="M954.500 988h7" stroke="#f08a18" stroke-width="1.600"/>
<text x="991.500" y="991" font-family="Liberation Sans" font-size="11" fill="#000">EN</text>
<g transform="translate(79 1011) rotate(45)"><rect x="-6" y="-6" width="5.300" height="5.300" fill="#ea6a6a"/><rect x=".7" y="-6" width="5.300" height="5.300" fill="#5aae4a"/><rect x="-6" y=".7" width="5.300" height="5.300" fill="#5a96e0"/><rect x=".7" y=".7" width="5.300" height="5.300" fill="#f4d060"/><rect x="-2" y="-2" width="4" height="4" fill="#d4d0c8"/></g>
<circle cx="112.700" cy="1011" r="8" fill="#e8f0fa"/><circle cx="112.700" cy="1011" r="6.800" fill="#3a7fd0"/><text x="107.800" y="1014" font-family="Liberation Sans" font-weight="bold" font-size="9" fill="#bcd8f6" letter-spacing="-.3">qb</text>
<rect x="142.500" y="1006.500" width="9.500" height="10" fill="#eef6d8" stroke="#3a9a3a" stroke-width="1.400"/><path d="M142 1003.500l5 9l5.500-9" fill="none" stroke="#1a3ac0" stroke-width="1.800"/><path d="M147 1012l-2.500 6M147 1012l2.500 6" stroke="#d83030" stroke-width="1.600"/><circle cx="147" cy="1012.500" r="1.800" fill="#d83030"/>
<rect x="176" y="1003.500" width="7.500" height="14" fill="#b8c4d0" stroke="#6a7a8c" stroke-width=".8"/><path d="M177 1006h5.500M177 1008.500h5.500M177 1011h5.500" stroke="#5a6a7c" stroke-width="1"/><rect x="180" y="1011.500" width="8.500" height="6.500" fill="#8fa0b4" stroke="#4a5a6c" stroke-width=".8"/><path d="M182.500 1011.500v-1.500h3.500v1.500" fill="none" stroke="#4a5a6c" stroke-width=".9"/><path d="M180 1014.500h8.500" stroke="#4a5a6c" stroke-width=".8"/>
<rect x="207.500" y="1003.500" width="15" height="15" rx="3.500" fill="#ececec" stroke="#d8d8d8" stroke-width=".6"/><circle cx="215" cy="1011" r="5.300" fill="#3a3a3a"/><path d="M211 1009c1.500-2 4-2.500 5-1l-2 2.500l1.500 2l-2 2.500c-1.500-1-2.500-3.500-2.500-6zM217 1010l2.500 1v3l-2 1z" fill="#dcdcdc"/><path d="M210 1012.300h10" stroke="#8ac04a" stroke-width=".8"/>
<path d="M242 1007l4-2.500l4 1.500v5l-4 2.500l-4-1.500z" fill="#3a9a3a"/><path d="M250 1005l4-1.500l3 2v4.500l-4 1.500l-3-2z" fill="#e8c020"/><path d="M246 1009.500l4.500-2l4 1.500v5l-4.500 2l-4-1.500z" fill="#3a78d0"/><path d="M242 1012l4 1.500l4 2.500l-1 2.500l-4.500-.5l-2.500-2.500z" fill="#d02a2a"/><path d="M252 1013l4.500-2v4l-4.500 3z" fill="#2a5fae"/>
<circle cx="283" cy="1011" r="7.800" fill="#58c058" stroke="#4a6a4a" stroke-width=".6"/><path d="M279 1005.500l3 2.500l-1 3.500l-3.500-1zM284 1006.500h4l1.500 3l-3 2zM280 1013l4-1l2.500 3l-3 2.500zM287.500 1012.500l2 1l-1.500 3z" fill="#8a6ab0"/><path d="M275.500 1011h15M283 1003.500v15" stroke="#6a8a6a" stroke-width=".5"/>
<rect x="311" y="1004.500" width="6" height="7.500" rx="1.500" fill="#c8c8c8" stroke="#111" stroke-width="1.500"/><rect x="316.500" y="1011" width="6" height="7.500" rx="1.500" fill="#a8a8a8" stroke="#111" stroke-width="1.500"/><path d="M317 1009l5-3.500M320.500 1005l2.500.3l-.5 2.500" stroke="#111" stroke-width="1.500" fill="none"/>
<path d="M345 1008l4-3h7l2 3v6l-3 2.500h-8l-2-2.500z" fill="#dfe8f6" stroke="#b8c8e0" stroke-width=".6"/><text x="346" y="1015" font-family="Liberation Sans" font-size="8" fill="#5a8ad0">λ</text><text x="351" y="1015" font-family="Liberation Sans" font-weight="bold" font-size="8" fill="#4aa04a">?</text>
<path d="M378 1003.500h6l-2 2l4 4l-2 2l-4-4l-2 2z" fill="#6ab0f0"/><rect x="377.500" y="1012" width="8" height="6.500" fill="#b8bcc8" stroke="#7a8090" stroke-width=".6"/><path d="M379.300 1012v-1.800a2.200 2.200 0 0 1 4.400 0v1.800" fill="none" stroke="#c8ccd8" stroke-width="1.300"/><rect x="380.800" y="1014" width="1.400" height="2.500" fill="#444"/><path d="M394 1019h-6l2-2l-4-4l2.500-2.500l4 4l2-2z" fill="#3ac03a"/>
<circle cx="419" cy="1011" r="7.600" fill="#8cc63f"/><circle cx="419" cy="1011" r="5" fill="none" stroke="#f2fae0" stroke-width="1.600"/><path d="M415 1015l8.500-9" stroke="#f2fae0" stroke-width="2.200"/><path d="M415.500 1008l3 2" stroke="#f2fae0" stroke-width="1.600"/>
<rect x="445" y="1003" width="16" height="16" fill="#d0e030"/><path d="M445 1003l16 16h-6l-10-10z" fill="#8ab820"/><path d="M445 1019l5 0l11-12v-4h-2l-14 13z" fill="#2a60c8"/><path d="M446 1019l14-15" stroke="#7ad0f0" stroke-width="1.200" stroke-dasharray="2 1.500"/><path d="M445 1012v7h6z" fill="#123a9a"/>
<circle cx="487" cy="1011" r="8" fill="#4cae4c"/><path d="M483 1007.500l7.500-1l-3 8.500z" fill="none" stroke="#e8f6e8" stroke-width="1"/><circle cx="483" cy="1007.500" r="1" fill="#e8f6e8"/><circle cx="490.500" cy="1006.500" r="1" fill="#e8f6e8"/><circle cx="487.500" cy="1015" r="1" fill="#e8f6e8"/>
<path d="M513 1005.500h5.500l1.500 1.500h8.500v10.500h-15.500z" fill="#f2cf5a" stroke="#c8a030" stroke-width=".6"/><path d="M514 1005.800h4" stroke="#5ab03a" stroke-width="1"/><path d="M514.500 1018v-5.500c0-1.500 1-2 2-2h9c1 0 2 .5 2 2v5.500h-3.500v-3.500h-6v3.500z" fill="#3a9ae0"/><path d="M515.500 1011.500h11" stroke="#9ad0f6" stroke-width="1"/>
<rect x="547.500" y="1004.500" width="15.500" height="12.500" fill="#f4f4f4" stroke="#8a8a8a" stroke-width="1.200"/><rect x="547.500" y="1004.500" width="15.500" height="2.500" fill="#b8b8c0"/><rect x="549.500" y="1008" width="5" height="7.500" fill="#3a8a5a"/><rect x="550.500" y="1009" width="2.500" height="3" fill="#2a60c8"/><path d="M556 1009.500h3.500M556 1011.500h3.500M556 1013.500h3.500" stroke="#8a8a9a" stroke-width=".8"/><path d="M561 1008v4" stroke="#2a60c8" stroke-width="1.200"/>
<path d="M1010.500 977v44" stroke="#808080" stroke-width="1"/><path d="M1011.500 977v44" stroke="#fff" stroke-width="1"/>
<path d="M1015.500 1022V976.500H1257" fill="none" stroke="#808080" stroke-width="1"/><path d="M1015.500 1022.500H1257.500V976.500" fill="none" stroke="#fff" stroke-width="1"/>
<rect x="1022.500" y="980.500" width="15" height="15" fill="#5a0a7a" stroke="#000" stroke-width="1"/><text x="1024" y="993" font-family="Liberation Sans" font-weight="bold" font-size="12" fill="#f6e020" letter-spacing="-1">Fz</text>
<circle cx="1054" cy="988" r="7.800" fill="#2a2a34"/><path d="M1050.500 984.500l7-1l-3 8z" fill="none" stroke="#f0f0f0" stroke-width="1"/><circle cx="1058.500" cy="992.500" r="2.800" fill="#e02a2a"/><path d="M1057.300 991.300l2.400 2.400M1059.700 991.300l-2.400 2.400" stroke="#fff" stroke-width=".8"/>
<rect x="1070" y="980" width="16.500" height="16" fill="#c8d830"/><path d="M1070 980l16.500 16h-6l-10.500-10z" fill="#6aa020"/><path d="M1070 996h5l11.500-12v-4h-2l-14.500 13z" fill="#2a60c8"/><path d="M1071 996l14.500-15" stroke="#7ad0f0" stroke-width="1.200" stroke-dasharray="2 1.500"/>
<circle cx="1102" cy="988" r="7.600" fill="#8cc63f"/><circle cx="1102" cy="988" r="5" fill="none" stroke="#f2fae0" stroke-width="1.600"/><path d="M1098 992l8.500-9" stroke="#f2fae0" stroke-width="2.200"/>
<rect x="1119.500" y="981.500" width="5.500" height="5.500" fill="#8ab8d8"/><rect x="1126" y="981" width="5.500" height="5.500" fill="#a8d0e8"/><rect x="1119" y="988.500" width="5.500" height="5.500" fill="#a8c8e0"/><rect x="1126" y="988" width="5.500" height="6" fill="#7aa8c8"/><rect x="1122.500" y="985" width="5.500" height="5.500" fill="#c8e0f0" opacity=".8"/>
<circle cx="1150" cy="988" r="7.600" fill="#3a6ad0" stroke="#1a3a8a" stroke-width=".8"/><circle cx="1150" cy="988" r="5.300" fill="#9ab8f0"/><path d="M1150 983.500l2 4.500l-2 4.500l-2-4.500zM1145.500 988l4.500-2l4.500 2l-4.500 2z" fill="#b040b0"/>
<rect x="1166" y="980.500" width="15" height="15" fill="#dcd8d0" stroke="#5a7a5a" stroke-width="1"/><path d="M1166.500 992l2.500 2l2-1l2 2.500h4l1.500-2.500l2 .5v2h-14.500z" fill="#2a9a2a"/>
<path d="M1025 1004.500h9v9c0 3-2 4.500-4.500 4.500s-4.500-1.500-4.500-4.500z" fill="#f4f4f4" stroke="#7a7a7a" stroke-width="1"/><path d="M1029.500 1004.500v5M1025 1009.500h9" stroke="#7a7a7a" stroke-width=".8"/><path d="M1027 1012l5 4M1032 1012l-5 4" stroke="#aaa" stroke-width="1"/>
<rect x="1046.500" y="1003.500" width="15" height="15" rx="2" fill="#f8f8f8" stroke="#9a9a9a" stroke-width="1"/><circle cx="1054" cy="1011" r="5.500" fill="#e8eef8" stroke="#9aa0b0" stroke-width=".8"/><path d="M1054 1011v-4M1054 1011l3 2" stroke="#5a80c0" stroke-width="1.200"/>
<path d="M1072.500 1003.500v4M1076.500 1003.500v4" stroke="#5a5a5a" stroke-width="1.400"/><path d="M1070.500 1007.500h8v4l-2 2.500v3h-4v-3l-2-2.500z" fill="#6a6a6a"/><circle cx="1081" cy="1014.500" r="4.500" fill="#2aa02a"/><path d="M1078.800 1014.500l1.700 1.800l3-3.500" fill="none" stroke="#fff" stroke-width="1.300"/>
<path d="M1096 1008.500h3l4-4v13l-4-4h-3z" fill="#f0f0f0" stroke="#6a6a6a" stroke-width="1"/><path d="M1106 1006.500c2 2.500 2 6.500 0 9" fill="none" stroke="#8a8a8a" stroke-width="1"/>
<path d="M1120.500 1004v15" stroke="#5a5a5a" stroke-width="1.400"/><path d="M1121.500 1004.500c3-1 5 1 8 0c2-.5 3 0 4 .5l-3 4l3 3.500c-2-1-3-1-5-.5c-3 .5-4.500-1-7 0z" fill="#f8f8f8" stroke="#5a5a5a" stroke-width="1"/>
<path d="M1146.500 1003.500v5M1149.500 1003.500v5M1145 1008.500h6v2l-3 2v5" fill="none" stroke="#3a3a3a" stroke-width="1.200"/><rect x="1149.500" y="1007.500" width="11" height="8.500" fill="#e8e8e8" stroke="#5a5a5a" stroke-width="1.200"/><path d="M1151 1018.500h8" stroke="#5a5a5a" stroke-width="1.400"/>
<text x="1223.500" y="994" text-anchor="middle" font-family="Liberation Sans" font-size="11.500" fill="#000">2:00 AM</text>
<text x="1224" y="1013.500" text-anchor="middle" font-family="Liberation Sans" font-size="11.500" fill="#000">11/24/2017</text>
<rect x="1261.500" y="993.500" width="15" height="9" fill="#3a8ae0"/><rect x="1261.500" y="993.500" width="15" height="2" fill="#8ac0f4"/><rect x="1262" y="1002.500" width="15" height="2" fill="#2a4a7a"/>
</svg>
</body></html>
